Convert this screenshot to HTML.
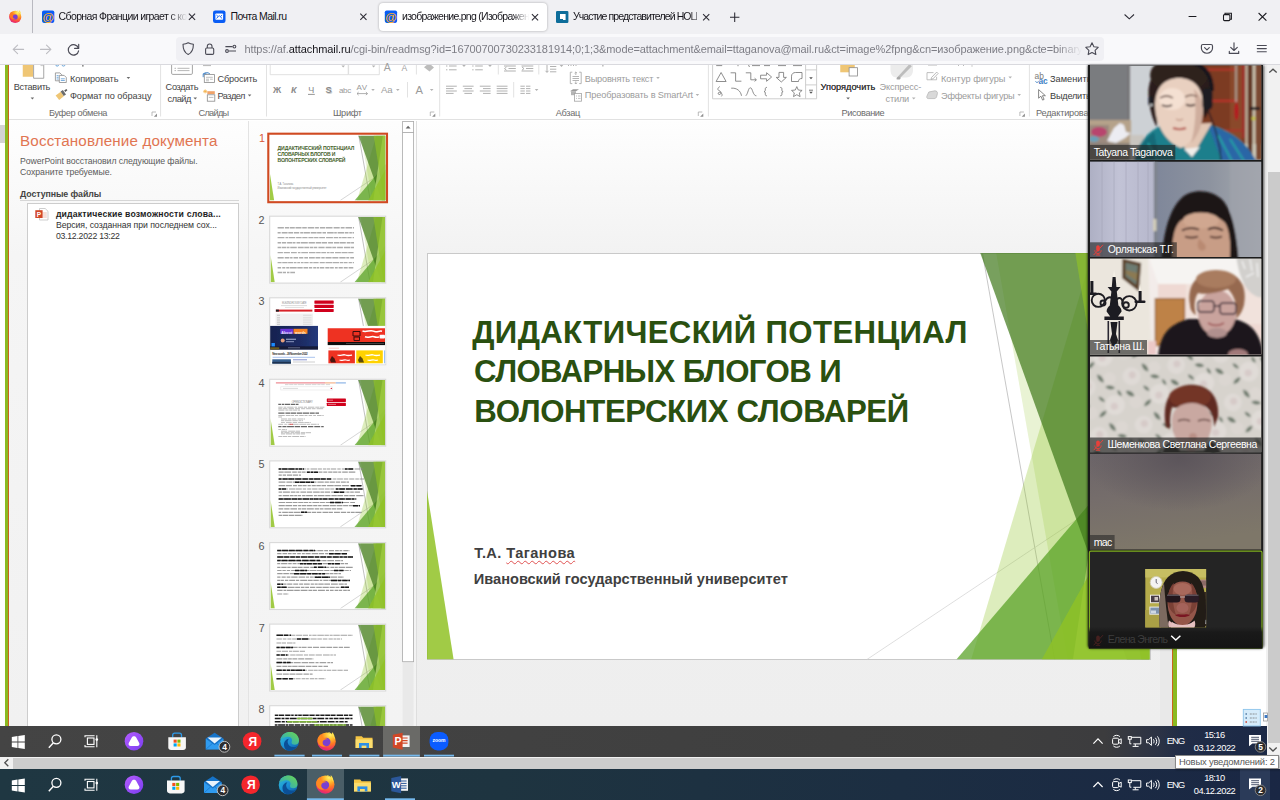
<!DOCTYPE html>
<html lang="ru"><head><meta charset="utf-8"><title>screenshot</title>
<style>
*{box-sizing:border-box;margin:0;padding:0}
html,body{width:1280px;height:800px;overflow:hidden;background:#fff}
body{position:relative;font-family:"Liberation Sans",sans-serif;color:#222}
.a{position:absolute}
.t{position:absolute;white-space:nowrap;line-height:1;font-family:"Liberation Sans",sans-serif}
svg{position:absolute;overflow:visible}
#tabbar{left:0;top:0;width:1280px;height:33.5px;background:#f0f0f3}
#navbar{left:0;top:33.5px;width:1280px;height:30.5px;background:#f9f9fb}
#navline{left:0;top:64px;width:1280px;height:1px;background:#d9d9de}
#urlbar{left:176px;top:37px;width:928px;height:23.5px;border-radius:4px;background:#f0f0f4}
#acttab{left:379px;top:3px;width:168px;height:27.5px;border-radius:4px;background:#fff;box-shadow:0 0 2.5px rgba(0,0,0,.32)}
#content{left:0;top:65px;width:1280px;height:735px;overflow:hidden;background:#fff}

</style></head>
<body>
<svg class="a" style="left:0;top:0" width="0" height="0">
<defs>
<symbol id="facet" viewBox="0 0 12192 6858" preserveAspectRatio="none">
<path d="M9371 0L10590 6858" stroke="var(--l1,#b9b9b9)" stroke-width="var(--lw,.8px)" vector-effect="non-scaling-stroke" fill="none"/>
<path d="M12189 3681L7425 6858" stroke="var(--l2,#d6d6d6)" stroke-width="var(--lw,.8px)" vector-effect="non-scaling-stroke" fill="none"/>
<path d="M11227 0H12192V6858H9181z" fill="#90c226" fill-opacity=".3"/>
<path d="M9603 0H12192V6858H10806z" fill="#90c226" fill-opacity=".2"/>
<path d="M12192 3048V6858H8932z" fill="#54a021" fill-opacity=".72"/>
<path d="M9335 0H12192V6858H11808z" fill="#3f7819" fill-opacity=".7"/>
<path d="M11918 0H12192V6858H10899z" fill="#c0e474" fill-opacity=".7"/>
<path d="M10939 0H12192V6858H12048z" fill="#90c226" fill-opacity=".65"/>
<path d="M12192 3590V6858H10372z" fill="#90c226" fill-opacity=".8"/>
<path d="M0 4013L449 6858H0z" fill="#90c226" fill-opacity=".85"/>
</symbol>
</defs>
</svg>

<div class="a" id="tabbar"></div>
<div class="a" id="navbar"></div>
<div class="a" id="navline"></div>
<div class="a" id="urlbar"></div>
<div class="a" id="acttab"></div>
<div class="a" style="left:32px;top:0;width:1px;height:33px;background:#b9b9c0"></div>

<svg class="a" style="left:0;top:0" width="1280" height="66" viewBox="0 0 1280 66">
<defs>
<radialGradient id="ffg" cx="0.7" cy="0.15" r="1">
<stop offset="0" stop-color="#fff36b"/><stop offset="0.25" stop-color="#ffbd2e"/><stop offset="0.5" stop-color="#ff7a22"/><stop offset="0.8" stop-color="#f2325c"/><stop offset="1" stop-color="#c026a0"/>
</radialGradient>
</defs>
<!-- firefox view icon -->
<circle cx="15.2" cy="16.9" r="6.1" fill="url(#ffg)"/>
<circle cx="15" cy="16.9" r="2.7" fill="#7a3fd0"/>
<path d="M9.6 14.5c.6-1.8 1.8-2.6 2.6-3-.2.9.2 1.6 1 2 1.3.5 2.6.3 3.3 1.3-1.5-.5-3.3 0-3.6 1.500-.3 1.400.8 2.500 2.200 2.600-2.500 1.300-5.800-.6-5.500-4.400z" fill="#ff7a22" opacity=".95"/>
<path d="M16.5 10.300c1.800.5 3.500 2.200 4.200 4.300.4-1.600-.3-3.500-1.500-4.500.1.600 0 1-.2 1.300-.6-.8-1.500-1.200-2.500-1.100z" fill="#ffe14d"/>
<!-- favicon 1: mail.ru @ -->
<rect x="42" y="10.400" width="12.300" height="12.500" rx="1.800" fill="#0a5df5"/>
<text x="48.150" y="20.600" font-family="Liberation Sans, sans-serif" font-weight="bold" font-size="11.800" text-anchor="middle" fill="#ffae1f">@</text>
<!-- favicon 3 -->
<rect x="384.800" y="10.400" width="12.300" height="12.500" rx="1.800" fill="#0a5df5"/>
<text x="390.950" y="20.600" font-family="Liberation Sans, sans-serif" font-weight="bold" font-size="11.800" text-anchor="middle" fill="#ffae1f">@</text>
<!-- favicon 2: envelope -->
<rect x="213" y="10.400" width="12.500" height="12.500" rx="2.200" fill="#0a5df5"/>
<rect x="215.400" y="13.500" width="7.700" height="6.300" rx=".8" fill="#fff"/>
<path d="M216.400 15l1.700 1.600 1.150-.9 1.150.9 1.700-1.600M216.400 18.400l1.700-1.500M222.100 18.400l-1.700-1.500" stroke="#0a5df5" stroke-width=".9" fill="none"/>
<!-- favicon 4 -->
<rect x="556" y="10.900" width="12.400" height="12" rx="1.200" fill="#0d6d9a"/>
<path d="M560 13.900h5.600v6.200h-2.600v-1.200h-3z" fill="#fff"/>
<!-- tab close X -->
<g stroke="#2b2a33" stroke-width="1.050" fill="none">
<path d="M188.900 13.700l6.200 6.200M195.100 13.700l-6.200 6.200"/>
<path d="M360.300 13.600l6.200 6.200M366.500 13.600l-6.200 6.200"/>
<path d="M531.900 14.100l6.200 6.200M538.100 14.100l-6.200 6.200"/>
<path d="M703.100 14.100l6.200 6.200M709.300 14.100l-6.200 6.200"/>
<path d="M730 17.250h9.400M734.700 12.550v9.400"/>
<path d="M1124.600 14.500l4.700 4.300 4.700-4.300"/>
</g>
<g stroke="#1a1a1f" stroke-width="1.050" fill="none">
<path d="M1188.600 16.500h7.800"/>
<path d="M1225 14.700v-1.500h6.400v6h-1.500"/>
<rect x="1223.500" y="14.600" width="6.400" height="6" rx="1"/>
<path d="M1258.600 13l7.800 7.600M1266.400 13l-7.800 7.600"/>
</g>
<!-- nav: back / forward / reload -->
<g stroke="#bdbdc2" stroke-width="1.100" fill="none" stroke-linecap="round" stroke-linejoin="round">
<path d="M23.600 49.400h-10.300M17.600 45.100l-4.400 4.300 4.400 4.300"/>
<path d="M40.500 49.400h10.300M46.500 45.100l4.400 4.300-4.400 4.300"/>
</g>
<g stroke="#4a4a55" stroke-width="1.150" fill="none" stroke-linecap="round" stroke-linejoin="round">
<path d="M78.400 48.200a5.200 5.200 0 1 0 .2 2.600"/>
<path d="M78.700 44.300v4.100h-4.100"/>
</g>
<!-- shield, lock, permissions -->
<g stroke="#4a4a55" stroke-width="1.100" fill="none" stroke-linejoin="round">
<path d="M188.200 42.700c1.700 1 3.400 1.400 5.200 1.500 0 4.600-1.200 8.300-5.200 10.300-4-2-5.200-5.700-5.200-10.300 1.800-.1 3.500-.5 5.200-1.500z"/>
<rect x="205.600" y="48" width="8.100" height="6.400" rx="1.200"/>
<path d="M207.300 48v-1.700a2.350 2.350 0 0 1 4.700 0v1.700"/>
<path d="M225.400 46.600h7.200M229 51h7"/>
<circle cx="234.400" cy="46.600" r="1.400"/>
<circle cx="227" cy="51" r="1.400"/>
</g>
<!-- star -->
<path d="M1092 42.800l1.900 3.900 4.300.6-3.100 3 .75 4.250-3.850-2.050-3.850 2.050.75-4.250-3.100-3 4.300-.6z" stroke="#4a4a55" stroke-width="1.100" fill="none" stroke-linejoin="round"/>
<!-- pocket, download, menu -->
<g stroke="#4a4a55" stroke-width="1.150" fill="none" stroke-linecap="round" stroke-linejoin="round">
<path d="M1202.900 44.500h8.100a1.500 1.500 0 0 1 1.500 1.500v2.200a5.550 5.100 0 0 1-11.100 0v-2.200a1.500 1.500 0 0 1 1.500-1.500z"/>
<path d="M1204.600 47.700l2.350 2.200 2.350-2.200"/>
<path d="M1234 42.800v7.500M1230.700 47.300l3.300 3.200 3.300-3.200M1229.300 51.400v2h9.400v-2"/>
<path d="M1257.300 45.500h9M1257.300 48.600h9M1257.300 51.700h9"/>
</g>
</svg>

<!-- ===== image content (PowerPoint window screenshot shown in the browser) ===== -->
<div class="a" style="left:0;top:125px;width:4.600px;height:17.500px;background:#d3d3d3"></div>
<div class="a" style="left:4.600px;top:65px;width:3.600px;height:661px;background:#8aba22"></div>
<div class="a" style="left:8.200px;top:65px;width:.9px;height:661px;background:#c9641f"></div>
<!-- ribbon bottom line -->
<div class="a" style="left:9px;top:119.300px;width:1079px;height:1px;background:#e1e1e1"></div>
<!-- left pane / thumb pane separator -->
<div class="a" style="left:247.800px;top:121px;width:1px;height:605px;background:#e3e3e3"></div>
<!-- thumbnails pane -->
<div class="a" style="left:248.800px;top:121px;width:167.500px;height:605px;background:linear-gradient(#fdfdfd,#f6f6f6 130px,#f3f3f3)"></div>
<!-- main edit area -->
<div class="a" style="left:416.300px;top:121px;width:756px;height:605px;background:linear-gradient(#fefefe,#f2f2f2 135px,#eeeeee)"></div>
<div class="a" style="left:416.300px;top:121px;width:1px;height:605px;background:#dedede"></div>
<!-- ppt vertical scrollbar strip -->
<div class="a" style="left:1159.500px;top:121px;width:12.500px;height:605px;background:#e9e9e9"></div>
<!-- right edge of ppt window + desktop strip -->
<div class="a" style="left:1172px;top:65px;width:.9px;height:661px;background:#c9641f"></div>
<div class="a" style="left:1172.800px;top:65px;width:3.800px;height:661px;background:#8aba22"></div>
<div class="a" style="left:1176.600px;top:65px;width:91px;height:661px;background:#fff"></div>
<!-- browser vertical scrollbar -->
<div class="a" style="left:1266.400px;top:65px;width:13.600px;height:691.500px;background:#f1f1f1"></div>
<div class="a" style="left:1268.200px;top:172.400px;width:11.800px;height:571px;background:#cbcbcb"></div>
<!-- browser horizontal scrollbar -->
<div class="a" style="left:0;top:756.400px;width:1280px;height:13.200px;background:#f1f1f1"></div>
<div class="a" style="left:13px;top:757.500px;width:1162px;height:11px;background:#cdcdcd"></div>
<svg class="a" style="left:0;top:0" width="1280" height="800" viewBox="0 0 1280 800">
<path d="M1269.300 72.600l3.700-3.400 3.700 3.400" stroke="#505050" stroke-width="1.300" fill="none"/>
<path d="M1269.300 747.600l3.700 3.400 3.700-3.400" stroke="#505050" stroke-width="1.300" fill="none"/>
<path d="M8.300 759.200l-3.500 3.500 3.500 3.500" stroke="#505050" stroke-width="1.300" fill="none"/>
</svg>

<!-- document recovery pane -->
<div class="a" style="left:9.100px;top:120.300px;width:238.700px;height:606px;background:linear-gradient(#fefefe,#f5f5f5 135px,#f1f1f1)"></div>
<div class="a" style="left:20px;top:199.600px;width:218.700px;height:1px;background:#d6d6d6"></div>
<div class="a" style="left:27px;top:203.400px;width:212px;height:523px;background:#fff;border:1px solid #cdcdcd;border-bottom:0"></div>
<svg class="a" style="left:0;top:0" width="1280" height="800" viewBox="0 0 1280 800">
<!-- pptx file icon -->
<path d="M39.500 208.500h5.700l2.800 2.800v8.700h-8.500z" fill="#fff" stroke="#b9b9b9" stroke-width=".7"/>
<path d="M42.500 213h4.300M42.500 215h4.300M42.500 217h4.300" stroke="#e3a090" stroke-width=".7"/>
<rect x="35.300" y="210.200" width="7.300" height="7.800" fill="#d24726"/>
<text x="38.950" y="216.500" font-family="Liberation Sans, sans-serif" font-weight="bold" font-size="6.500" text-anchor="middle" fill="#fff">P</text>
</svg>

<!-- ribbon icons -->
<svg class="a" style="left:0;top:65px" width="1090" height="56" viewBox="0 65 1090 56">
<defs><clipPath id="rc"><rect x="9" y="65" width="1081" height="55"/></clipPath></defs>
<g clip-path="url(#rc)">
<!-- group separators -->
<g stroke="#e2e2e2" stroke-width="1">
<path d="M160.600 65v51.500M266.500 65v51.500M439.700 65v51.500M708.400 65v51.500M1029.400 65v51.500"/>
<path d="M416.400 65v9.500M407.500 82v15.500M498.300 65v9.500M538.800 65v9.500M513.700 82v15.500"/>
</g>
<!-- dialog launchers -->
<g stroke="#a9a9a9" stroke-width=".8" fill="none">
<path d="M152 116v-4h4M1019.900 116v-4h4M430.300 116v-4h4M698.300 116v-4h4"/>
</g>
<g fill="#8f8f8f">
<path d="M157 113.500v3.200h-3.200zM1024.900 113.500v3.200h-3.200zM435.300 113.500v3.200h-3.200zM703.300 113.500v3.200h-3.200z"/>
</g>
<!-- dropdown arrows dark -->
<g fill="#6a6a6a">
<path d="M30.600 97.600h3.600l-1.800 2zM126.600 77h3.600l-1.800 2zM193.450 97.600h3.600l-1.800 2zM247.800 94.500h3.600l-1.800 2zM846.300 97.600h3.600l-1.800 2z"/>
</g>
<g fill="#b3b3b3">
<path d="M341.400 65.500h3.600l-1.800 2zM371.800 65.500h3.600l-1.800 2zM371.200 89h3.600l-1.800 2zM396 89h3.600l-1.800 2zM429.900 89h3.600l-1.800 2zM462.200 65h3.600l-1.800 2zM488.200 65h3.600l-1.800 2zM559.700 65h3.600l-1.800 2zM534.800 89h3.600l-1.800 2zM656.200 77h3.600l-1.800 2zM695.600 94h3.600l-1.800 2zM911.950 97.600h3.600l-1.800 2zM1008.400 76.600h3.600l-1.800 2zM1017.400 94h3.600l-1.800 2z"/>
</g>
<!-- paste -->
<rect x="22.750" y="60" width="10.250" height="16.750" fill="#efc675"/>
<path d="M33.600 60h7.300l2.850 2.850v15.400h-10.150z" fill="#fff" stroke="#9c9c9c" stroke-width=".9"/>
<path d="M40.900 60v5.600h2.850" fill="none" stroke="#b5b5b5" stroke-width=".7"/>
<!-- cut remnants -->
<circle cx="57.200" cy="64.600" r="1.500" fill="none" stroke="#5b9bd5" stroke-width=".9"/>
<circle cx="63.500" cy="64.600" r="1.500" fill="none" stroke="#5b9bd5" stroke-width=".9"/>
<rect x="82.400" y="65" width="1" height="1.600" fill="#444"/>
<!-- copy -->
<g fill="#fff" stroke="#8a8a8a" stroke-width=".8">
<path d="M55.400 72.900h4.500l1.900 1.900v6h-6.400z"/>
<path d="M59.300 75.400h4.900l2.100 2.100v5h-7z"/>
</g>
<path d="M56.600 75.600h2M56.600 77.300h2M56.600 79h2M60.800 78.800h4M60.800 80.500h4" stroke="#5b9bd5" stroke-width=".8"/>
<!-- format painter -->
<path d="M55.600 95.400l5.200-3.600 3 4.400-4.600 3.800z" fill="#efc675"/>
<path d="M60.600 91.600l2.300-1.600 3.100 4.400-2.300 1.700z" fill="#6b6b6b"/>
<path d="M64.200 90.500l2.200-1.500 1 1.300-2.200 1.600z" fill="#555"/>
<!-- new slide -->
<rect x="171.600" y="58" width="20.800" height="16.400" rx="1.200" fill="#fff" stroke="#9a9a9a" stroke-width=".9"/>
<path d="M174.500 68.300h1.500M177.500 68.300h12M174.500 70.600h1.500M177.500 70.600h12" stroke="#a5a5a5" stroke-width=".8"/>
<rect x="203" y="65" width="8" height="1.100" fill="#bdbdbd"/>
<!-- reset -->
<rect x="204.300" y="74.600" width="10.200" height="7.800" fill="#fff" stroke="#8a8a8a" stroke-width=".8"/>
<path d="M206 77.300h6.800M206 79.200h3M210 79.200h2.800M206 80.800h3" stroke="#a5a5a5" stroke-width=".7"/>
<path d="M203.200 77.200v-3.400h3.400" fill="none" stroke="#3c7fc4" stroke-width=".9"/>
<path d="M203.400 74c1.600-1.600 4.400-1.900 6.400-.2" fill="none" stroke="#3c7fc4" stroke-width="1"/>
<!-- section -->
<rect x="207.300" y="91.200" width="7.500" height="2.800" fill="#f0a36a"/>
<rect x="207.300" y="94.800" width="7.500" height="6.400" fill="#fff" stroke="#8a8a8a" stroke-width=".8"/>
<path d="M208.800 97.400h4.600" stroke="#a5a5a5" stroke-width=".7"/>
<path d="M205.200 89.400v4M203.200 91.400h4M203.800 90l2.800 2.800M206.600 90l-2.800 2.800" stroke="#f2b24c" stroke-width=".8"/>
<!-- font combos -->
<path d="M270.200 65v9.700h78.000v-9.700M348.600 65v9.700h30.700v-9.700" fill="none" stroke="#dedede" stroke-width=".9"/>
<!-- eraser -->
<path d="M424 67.200l5-4 5 4.200-4.500 4.200z" fill="#bcbcbc"/>
<!-- underline for Ч, AV arrow -->
<path d="M308 94.400h6.800" stroke="#8a8a8a" stroke-width=".9"/>
<path d="M357 93.600h10.500M358.600 92.100l-1.600 1.500 1.600 1.500M365.900 92.100l1.600 1.500-1.600 1.500" stroke="#9a9a9a" stroke-width=".8" fill="none"/>
<!-- paragraph row 1 -->
<g stroke="#a8a8a8" stroke-width=".9" fill="none">
<path d="M446 66h1.400M449 66h7.600M446 69.800h1.400M449 69.800h7.600"/>
<path d="M472.200 66h1.400M475.200 66h7.600M472.200 69.800h1.400M475.200 69.800h7.600"/>
<path d="M504 66h11.800M508.500 68.500h7.300M504 71h11.800M506.500 67l-2 1.600 2 1.600"/>
<path d="M521.500 66h11.800M526 68.500h7.300M521.500 71h11.800M522 67l2 1.600-2 1.600"/>
<path d="M550 66.500h6.300M550 69.200h6.300M550 71.800h6.300M547 65v7.200M545.500 70.800l1.500 1.600 1.500-1.600"/>
<path d="M568 65.500h1M570.500 65.500h1M573 65.500h1M575.500 65.500h1"/>
</g>
<rect x="602.400" y="65" width="1" height="1.500" fill="#999"/>
<!-- paragraph row 2 : alignment -->
<g stroke="#a3a3a3" stroke-width=".85" fill="none">
<path d="M446 86.200h10.800M446 88.600h7.600M446 91h10.800M446 93.400h7.600"/>
<path d="M462.800 86.200h10.800M464.400 88.600h7.600M462.800 91h10.800M464.400 93.400h7.600"/>
<path d="M479.800 86.200h10.800M483 88.600h7.600M479.800 91h10.800M483 93.400h7.600"/>
<path d="M496.700 86.200h10.800M496.700 88.600h10.800M496.700 91h10.800M496.700 93.400h10.800"/>
<path d="M520.400 86.200h4.400M526 86.200h4.400M520.400 88.600h4.400M526 88.600h4.400M520.400 91h4.400M526 91h4.400M520.400 93.400h4.400M526 93.400h4.400"/>
</g>
<!-- align text icon -->
<g stroke="#a8a8a8" stroke-width=".85" fill="none">
<path d="M570.300 72.200h2M579.200 72.200h2M570.300 83.600h2M579.200 83.600h2M570.300 72.200v11.400M581.200 72.200v11.400"/>
<path d="M572.500 76.500h6.500M572.500 78.500h6.500M572.500 80.500h6.500"/>
<path d="M575.800 72v3M574.600 73.200l1.200-1.200 1.200 1.200M575.800 84v-2.600M574.600 82.800l1.200 1.200 1.200-1.200"/>
</g>
<!-- smartart icon -->
<path d="M570 91.200l3-2h6l-3 2z" fill="#9a9a9a"/>
<rect x="571" y="91.200" width="5" height="4" fill="#b5b5b5"/>
<rect x="574.600" y="93.400" width="7" height="7.800" fill="#fff" stroke="#a3a3a3" stroke-width=".8"/>
<path d="M576 96h1M578 96h2.600M576 98.400h1M578 98.400h2.600" stroke="#a8a8a8" stroke-width=".7"/>
<!-- shapes gallery -->
<path d="M712.600 65v33.800h104v-33.800M805.600 65v33.800M805.600 69.900h11M805.600 84.900h11" fill="none" stroke="#c8c8c8" stroke-width=".9"/>
<path d="M809.200 77.200h3.600l-1.800 2zM809.200 91.800h3.600l-1.800 2z" fill="#555"/>
<path d="M809 90.200h4" stroke="#555" stroke-width=".8"/>
<g stroke="#7a7a7a" stroke-width=".85" fill="none" stroke-linejoin="round">
<path d="M716.200 65.600h6M738 65v1.200M748 65.500l2 1M752 65.600h8M764 65.600h6M778 65.600h8M793 65.600h9"/>
<path d="M721.100 72.500l5 9h-10z"/>
<path d="M730.600 72.800h5v8.400h5.800"/>
<path d="M745.800 72.800h5v7h5.400M754.600 78.200l1.800 1.600-1.800 1.600"/>
<path d="M760.600 75.200h6v-2.500l5 4.300-5 4.300v-2.500h-6z"/>
<path d="M779 72.400h4.600v5h2.800l-5.100 4.600-5.100-4.600h2.800z"/>
<path d="M791.500 76.200c0-2.300 1.800-3.700 4-3.700h6.500v6c-2.500 0-3.500 1-3.500 3h-7z"/>
<path d="M719.800 86.600c-2.200 1.200-2.600 3.200-.8 4 1.800.8 2.600 1.600 1.800 3-.8 1.400-2.800 1.200-2.600-.4.200-1.400 2.400-1.200 3.400.2.800 1.200.6 2.200-.2 3"/>
<path d="M731.200 88.200c5.500-.5 9.500 2.600 10.300 7.600"/>
<path d="M745.800 95.800c2.500-2.500 2.300-8 4.600-8s2.300 8 6 8"/>
<path d="M767 87.400c-1.300 0-1.700.5-1.700 1.600v1.300c0 .8-.4 1.200-1.200 1.300.8.100 1.200.5 1.200 1.300v1.300c0 1.100.4 1.600 1.700 1.600"/>
<path d="M780.200 87.400c1.300 0 1.700.5 1.700 1.600v1.300c0 .8.400 1.200 1.200 1.300-.8.100-1.200.5-1.200 1.300v1.300c0 1.100-.4 1.600-1.700 1.600"/>
<path d="M796.800 86.600l1.500 3.400 3.800.4-2.800 2.500.8 3.700-3.300-1.900-3.300 1.900.8-3.700-2.800-2.500 3.800-.4z"/>
</g>
<!-- arrange -->
<rect x="840.250" y="60" width="14.500" height="12.300" fill="#efc675"/>
<rect x="849.100" y="67.700" width="8.300" height="8.300" fill="#fff" stroke="#8a8a8a" stroke-width=".8"/>
<!-- quick styles -->
<path d="M890.500 60v10c0 4 2 7.500 6 7.500h10c4 0 6.500-3 6.500-7.500v-10z" fill="#ececec"/>
<path d="M898 76.500l11.500-12.500 2.300 2.300-12 12z" fill="#bdbdbd"/>
<path d="M896.500 79.200c0-2 1.500-3 3-2.500l1 1c.5 1.500-1 2.500-4 1.500z" fill="#a8a8a8"/>
<!-- outline / effects / top remnants -->
<path d="M927 72.600h6.500M927 72.600v7.200h9.600v-3" stroke="#b5b5b5" stroke-width=".85" fill="none"/>
<path d="M931.500 77.500l5.200-5.400 1.400 1.400-5.200 5.400-1.900.5z" fill="none" stroke="#a8a8a8" stroke-width=".8"/>
<path d="M928.800 92l6-1.200c1.800 0 3 1.200 2.600 2.800l-.8 3.200c-.3 1.200-1.300 1.800-2.600 1.800h-5.600c-1.300 0-1.900-1-1.600-2.200z" fill="#d9d9d9" stroke="#b0b0b0" stroke-width=".7"/>
<path d="M928 65.500h9" stroke="#dcdcdc" stroke-width="1"/>
<path d="M958 65.400h1M963 65.400h1M972 65.300v1.300" stroke="#aaa" stroke-width=".9"/>
<!-- replace / select -->
<text x="1034.600" y="78.800" font-family="Liberation Sans, sans-serif" font-size="8.400" fill="#7a7a7a">ab</text>
<text x="1038.400" y="84" font-family="Liberation Sans, sans-serif" font-size="8.400" font-weight="bold" fill="#3c7fc4">ac</text>
<path d="M1035.500 81.200l1.500 1.600 1.500-1.600" fill="none" stroke="#3c7fc4" stroke-width=".9"/>
<path d="M1038.600 89.600v8.600l2.300-2 1.700 3.900 1.500-.7-1.700-3.700h3z" fill="#fff" stroke="#6a6a6a" stroke-width=".8" stroke-linejoin="round"/>
</g>
</svg>

<!-- main slide -->
<div class="a" style="left:426.500px;top:252.600px;width:724px;height:407.600px;background:#fff;border:1px solid #c9c9c9"></div>
<svg class="a" style="left:427.200px;top:253.300px" width="722.600" height="406.400"><use href="#facet" width="722.600" height="406.400"/></svg>

<!-- slide thumbnails pane -->
<svg class="a" style="left:0;top:121px" width="420" height="605" viewBox="0 121 420 605">
<defs><clipPath id="tc"><rect x="248" y="121" width="170" height="605"/></clipPath></defs>
<filter id="tb3" x="-5%" y="-5%" width="110%" height="110%"><feGaussianBlur stdDeviation=".32"/></filter>
<g clip-path="url(#tc)">
<rect x="402.600" y="121.500" width="11" height="604.500" fill="#e9e9e9"/>
<rect x="402.600" y="121.500" width="11" height="11" fill="#fff" stroke="#ababab" stroke-width=".8"/>
<path d="M405.600 128.600h5l-2.500-2.900z" fill="#666"/>
<rect x="402.600" y="132.500" width="11" height="529.200" fill="#fff" stroke="#ababab" stroke-width=".8"/>
<rect x="268.300" y="133.700" width="118.700" height="68.500" fill="#fff" stroke="#d04a22" stroke-width="2.100"/>
<use href="#facet" x="269.900" y="135.400" width="115.600" height="65" style="--l1:#8e8e8e;--l2:#b4b4b4;--lw:.55px"/>
<rect x="269.700" y="216.2" width="116" height="66.900" fill="#fff" stroke="#d9d9d9" stroke-width="1.100"/>
<use href="#facet" x="270.500" y="216.9" width="114.600" height="65.300" style="--l1:#8e8e8e;--l2:#b4b4b4;--lw:.55px"/>
<rect x="269.700" y="297.8" width="116" height="66.900" fill="#fff" stroke="#d9d9d9" stroke-width="1.100"/>
<use href="#facet" x="270.500" y="298.5" width="114.600" height="65.300" style="--l1:#8e8e8e;--l2:#b4b4b4;--lw:.55px"/>
<rect x="269.700" y="379.3" width="116" height="66.900" fill="#fff" stroke="#d9d9d9" stroke-width="1.100"/>
<use href="#facet" x="270.500" y="380.0" width="114.600" height="65.300" style="--l1:#8e8e8e;--l2:#b4b4b4;--lw:.55px"/>
<rect x="269.700" y="460.9" width="116" height="66.900" fill="#fff" stroke="#d9d9d9" stroke-width="1.100"/>
<use href="#facet" x="270.500" y="461.6" width="114.600" height="65.300" style="--l1:#8e8e8e;--l2:#b4b4b4;--lw:.55px"/>
<rect x="269.700" y="542.6" width="116" height="66.900" fill="#fff" stroke="#d9d9d9" stroke-width="1.100"/>
<use href="#facet" x="270.500" y="543.3" width="114.600" height="65.300" style="--l1:#8e8e8e;--l2:#b4b4b4;--lw:.55px"/>
<rect x="269.700" y="624.1" width="116" height="66.900" fill="#fff" stroke="#d9d9d9" stroke-width="1.100"/>
<use href="#facet" x="270.500" y="624.8" width="114.600" height="65.300" style="--l1:#8e8e8e;--l2:#b4b4b4;--lw:.55px"/>
<rect x="269.700" y="705.7" width="116" height="66.900" fill="#fff" stroke="#d9d9d9" stroke-width="1.100"/>
<use href="#facet" x="270.500" y="706.4" width="114.600" height="65.300" style="--l1:#8e8e8e;--l2:#b4b4b4;--lw:.55px"/>
<g filter="url(#tb3)">
<path d="M277.6 227.7H354.0" stroke="#777" stroke-width="1.4" stroke-dasharray="6.3 1.0 4.4 0.7 4.8 0.7 6.0 0.7 4.6 0.9 6.6 0.8 3.8 1.0 5.3 0.7 6.6 1.1 6.1 1.0 3.9 0.9 6.5 0.9 4.6 0.6" opacity="0.6"/>
<path d="M277.6 232.8H354.0" stroke="#777" stroke-width="1.4" stroke-dasharray="3.1 1.0 5.9 0.7 4.7 0.8 5.4 1.0 2.9 0.5 6.3 0.8 5.9 0.5 4.5 0.9 3.5 1.1 6.6 0.5 2.6 0.8 6.7 0.7 3.5 0.8 2.6 0.6 4.5 0.8" opacity="0.6"/>
<path d="M277.6 237.6H354.0" stroke="#777" stroke-width="1.4" stroke-dasharray="6.8 1.1 2.8 0.6 6.3 0.9 5.5 0.7 5.2 0.9 5.1 0.6 4.4 0.7 5.8 1.1 6.8 0.8 4.5 0.7 2.7 0.5 4.6 0.7 4.2 1.0 4.9 0.8" opacity="0.6"/>
<path d="M277.6 242.7H354.0" stroke="#777" stroke-width="1.4" stroke-dasharray="3.6 0.8 4.2 0.9 5.3 0.5 2.6 1.0 3.7 0.6 7.0 0.8 6.3 0.8 5.4 0.6 5.4 1.0 4.9 0.9 5.5 0.5 5.9 0.9 3.9 0.5 6.4 0.8" opacity="0.6"/>
<path d="M277.6 247.5H354.0" stroke="#777" stroke-width="1.4" stroke-dasharray="3.6 0.6 4.3 0.6 2.8 0.7 6.6 1.0 5.9 0.6 4.9 0.7 3.3 0.6 3.5 1.1 6.2 1.0 6.1 0.6 3.9 0.9 5.8 1.0 6.5 0.6 5.2 0.9" opacity="0.6"/>
<path d="M277.6 252.6H354.0" stroke="#777" stroke-width="1.4" stroke-dasharray="5.3 0.9 6.1 1.1 5.8 1.1 2.6 0.8 6.7 0.9 6.6 0.6 4.6 0.6 4.9 0.8 2.6 0.6 3.8 1.0 5.9 0.6 6.1 0.6 5.3 0.6" opacity="0.6"/>
<path d="M277.6 257.7H354.0" stroke="#777" stroke-width="1.4" stroke-dasharray="6.1 1.0 4.7 0.7 2.5 0.9 4.6 1.0 4.2 1.0 3.7 1.0 5.8 0.7 4.9 0.9 3.4 0.8 6.1 0.7 6.1 0.9 6.3 0.7 2.9 1.0 6.1 0.8" opacity="0.6"/>
<path d="M277.6 262.6H354.0" stroke="#777" stroke-width="1.4" stroke-dasharray="4.0 0.6 5.4 0.5 4.9 0.7 2.8 0.8 2.7 0.8 2.8 0.6 4.4 1.0 3.1 0.6 5.3 1.1 5.1 0.7 6.9 0.5 6.4 0.7 3.1 0.6 3.9 1.0 3.3 0.8 5.4 0.7" opacity="0.6"/>
<path d="M277.6 267.7H354.0" stroke="#777" stroke-width="1.4" stroke-dasharray="3.5 1.1 3.1 0.9 2.9 0.6 7.0 0.6 5.4 0.8 4.5 0.8 3.4 1.0 2.9 0.6 2.6 0.7 4.3 1.0 4.2 0.6 3.7 1.1 2.8 0.9 4.2 0.9 4.0 0.9 4.7 0.9" opacity="0.6"/>
<path d="M277.6 272.5H295.0" stroke="#777" stroke-width="1.4" stroke-dasharray="4.6 0.7 3.1 1.0 2.5 0.8 6.5 0.5" opacity="0.6"/>
<rect x="270.500" y="325.900" width="115" height="38.400" fill="#fff"/>
<path d="M281.0 305.6H307.0" stroke="#d8d8d8" stroke-width="0.9" opacity="1"/>
<path d="M285.0 307.5H304.0" stroke="#dedede" stroke-width="0.9" opacity="1"/>
<rect x="275.900" y="309.600" width="36.500" height="2" fill="#d8232a"/><rect x="275.900" y="309.600" width="3" height="2" fill="#222"/>
<rect x="275.600" y="313.600" width="37.400" height="11.600" fill="#f1f1f1"/>
<path d="M277.0 315.3H280.0" stroke="#bbb" stroke-width="0.8" opacity="1"/>
<path d="M303.0 315.3H311.5" stroke="#d5d5d5" stroke-width="0.8" opacity="1"/>
<path d="M277.0 317.8H280.0" stroke="#bbb" stroke-width="0.8" opacity="1"/>
<path d="M303.0 317.8H311.5" stroke="#d5d5d5" stroke-width="0.8" opacity="1"/>
<path d="M277.0 320.0H280.0" stroke="#bbb" stroke-width="0.8" opacity="1"/>
<path d="M303.0 320.0H311.5" stroke="#d5d5d5" stroke-width="0.8" opacity="1"/>
<path d="M277.0 322.2H280.0" stroke="#bbb" stroke-width="0.8" opacity="1"/>
<path d="M303.0 322.2H311.5" stroke="#d5d5d5" stroke-width="0.8" opacity="1"/>
<path d="M277.0 324.3H280.0" stroke="#bbb" stroke-width="0.8" opacity="1"/>
<path d="M303.0 324.3H311.5" stroke="#d5d5d5" stroke-width="0.8" opacity="1"/>
<rect x="314.400" y="300.6" width="19.300" height="3.100" rx=".4" fill="#d0021b"/>
<rect x="314.400" y="304.8" width="19.300" height="3.100" rx=".4" fill="#d0021b"/>
<rect x="314.400" y="308.9" width="19.300" height="3.100" rx=".4" fill="#d0021b"/>
<linearGradient id="nv" x1="0" x2="1"><stop offset="0" stop-color="#17224f"/><stop offset=".7" stop-color="#1c2d66"/><stop offset="1" stop-color="#25397c"/></linearGradient>
<rect x="270.200" y="325.900" width="47.800" height="23.600" fill="url(#nv)"/>
<rect x="270.200" y="346.300" width="47.800" height="3.200" fill="#141a38"/><rect x="270.200" y="347.300" width="9" height="2.200" fill="#6b5a1e"/>
<rect x="271.500" y="343" width="3.400" height="3.400" fill="#1a8cff"/>
<rect x="280.300" y="328.800" width="13" height="5" fill="#6b35d9"/><rect x="293.500" y="328.800" width="14" height="5" fill="#f58220"/>
<circle cx="282.700" cy="340.400" r="2" fill="#e7a07c"/>
<path d="M286.0 339.3H296.0" stroke="#8d98bd" stroke-width="1.3" opacity="1"/>
<path d="M286.0 341.6H294.0" stroke="#7783ad" stroke-width="1.3" opacity="1"/>
<path d="M288.0 347.8H300.0" stroke="#69708f" stroke-width="0.9" opacity="1"/>
<rect x="327.700" y="328.250" width="57.300" height="13.800" fill="#ee3124"/><rect x="327.700" y="342" width="57.300" height="3.100" fill="#0a0a0a"/>
<path d="M353 331.500h7v4.500h-7zM354 337h5.500v3.600h-5.500z" fill="none" stroke="#3a0d0a" stroke-width="1"/>
<path d="M362.500 331c4 1.500 8-1.500 11 .2s5.500-.8 8.500 0M365 336.800c3.500 1.500 6-1 9 0s3.500.8 5 0" fill="none" stroke="#fff" stroke-width="1.500"/>
<rect x="379.500" y="334.800" width="5.500" height="3.600" rx="1" fill="#fff"/>
<path d="M346.0 343.6H384.0" stroke="#8a8a8a" stroke-width="0.6" opacity="0.8"/>
<path d="M328.6 348.2H339.0" stroke="#f3b1ab" stroke-width="0.7" opacity="1"/>
<rect x="328.400" y="350.400" width="26.500" height="12.900" fill="#ee3124"/><rect x="356.250" y="350.400" width="26.550" height="12.900" fill="#ffd200"/><rect x="384.200" y="350.400" width=".9" height="12.900" fill="#7fb2f0"/>
<path d="M337.500 355c3 1.200 5.500-1 8 0s4 .6 6.500 0M339.500 360c2.500 1 4.500-.6 6.500 0s2.500.5 4 0" fill="none" stroke="#fff" stroke-width="1.300"/>
<path d="M365.500 355c3 1.200 5.500-1 8 0s4 .6 6.500 0M367.500 360c2.500 1 4.500-.6 6.500 0s2.500.5 4 0" fill="none" stroke="#fff" stroke-width="1.300"/>
<path d="M330 360l2-4 2.500 2.500 1.500 4h-5z" fill="#4a1210"/><path d="M358 360l2-4 2.500 2.500 1.500 4h-5z" fill="#5c4a08"/>
<path d="M272.6 357.3H315.0" stroke="#a9c4ee" stroke-width="1" opacity="1"/>
<rect x="272.300" y="359.300" width="18.600" height="4.300" fill="#35608f"/><rect x="272.300" y="361.800" width="18.600" height="1.800" fill="#1e3350"/>
<path d="M293.0 359.8H307.0" stroke="#7d87c9" stroke-width="0.9" opacity="1"/>
<path d="M293.0 362.0H315.0" stroke="#c9c9c9" stroke-width="0.9" opacity="1"/>
<path d="M275.900 382.900H325" stroke="#ee8d95" stroke-width="1.200"/><path d="M325 382.900h10.700" stroke="#f5b38a" stroke-width="1.200"/><path d="M335.700 382.900h10.200" stroke="#8db4e6" stroke-width="1.200"/>
<path d="M285.0 384.6H330.0" stroke="#c9c9c9" stroke-width="0.8" stroke-dasharray="3.6 0.6 4.3 0.6 2.8 0.7 6.6 1.0 5.9 0.6 4.9 0.7 3.3 0.6 3.5 1.1 6.2 1.0" opacity="1"/>
<rect x="280.800" y="386.800" width="51.500" height="3.200" fill="#fff" stroke="#e3e3e3" stroke-width=".6"/>
<path d="M283.0 388.4H298.0" stroke="#d0d0d0" stroke-width="0.8" opacity="1"/>
<circle cx="331.300" cy="388.400" r=".6" fill="#d0021b"/>
<rect x="326.800" y="398.600" width="19.100" height="3.300" rx=".4" fill="#d0021b"/><rect x="326.800" y="402.800" width="19.100" height="3.200" rx=".4" fill="#d0021b"/>
<path d="M328.0 400.2H333.0" stroke="#f2a3aa" stroke-width="0.7" opacity="1"/>
<path d="M328.0 404.4H336.0" stroke="#f2a3aa" stroke-width="0.7" opacity="1"/>
<path d="M278.3 404.3H298.5" stroke="#555" stroke-width="1.3" stroke-dasharray="2.9 0.7 2.5 0.6 5.2 0.7 4.3 0.6 6.5 0.9" opacity="0.9"/>
<path d="M278.3 413.2H319.0" stroke="#555" stroke-width="1.3" stroke-dasharray="6.2 0.9 4.6 0.5 5.7 0.7 5.5 0.6 6.1 0.7 4.9 0.7 6.1 0.8" opacity="0.9"/>
<path d="M278.3 426.7H323.7" stroke="#555" stroke-width="1.3" stroke-dasharray="3.2 0.9 4.1 0.6 6.8 0.7 5.5 0.8 6.1 1.0 5.3 1.0 5.9 1.0 3.9 0.8" opacity="0.9"/>
<path d="M278.3 407.2H324.4" stroke="#9a9a9a" stroke-width="0.8" stroke-dasharray="4.3 1.0 2.8 0.8 6.4 0.9 2.6 0.9 5.2 0.7 3.1 0.9 6.5 0.9 4.1 0.5 6.2 0.9" opacity="0.85"/>
<path d="M278.3 408.7H324.0" stroke="#9a9a9a" stroke-width="0.8" stroke-dasharray="3.6 0.8 4.7 1.1 5.5 1.1 4.9 1.1 4.1 0.9 5.2 0.7 3.6 1.0 6.6 0.9" opacity="0.85"/>
<path d="M278.3 410.1H300.0" stroke="#9a9a9a" stroke-width="0.8" stroke-dasharray="6.1 1.0 3.1 0.7 3.3 0.6 4.0 0.7 4.7 1.0" opacity="0.85"/>
<path d="M278.3 415.5H323.7" stroke="#9a9a9a" stroke-width="0.8" stroke-dasharray="6.5 1.0 4.8 0.5 2.9 0.9 3.3 1.0 4.5 0.8 3.0 1.1 3.5 1.1 2.7 1.1 4.6 0.7 5.6 0.7" opacity="0.85"/>
<path d="M278.3 417.0H282.0" stroke="#9a9a9a" stroke-width="0.8" stroke-dasharray="4.0 1.0" opacity="0.85"/>
<path d="M281.0 419.0H305.0" stroke="#9a9a9a" stroke-width="0.8" stroke-dasharray="6.0 0.8 3.4 0.6 4.6 1.1 5.7 0.5 6.0 1.0" opacity="0.85"/>
<path d="M281.0 420.7H303.0" stroke="#9a9a9a" stroke-width="0.8" stroke-dasharray="3.2 0.6 6.8 0.8 5.3 0.9 2.8 0.5 5.0 1.0" opacity="0.85"/>
<path d="M281.0 422.4H311.0" stroke="#9a9a9a" stroke-width="0.8" stroke-dasharray="3.9 1.1 5.7 1.0 4.5 0.9 5.7 0.5 5.2 0.7 4.5 1.0" opacity="0.85"/>
<path d="M278.3 424.3H319.0" stroke="#9a9a9a" stroke-width="0.8" stroke-dasharray="4.9 1.1 2.6 0.8 3.4 0.7 6.9 0.6 7.0 0.5 3.5 0.7 5.7 0.7 3.8 0.6" opacity="0.85"/>
<path d="M278.3 429.4H287.0" stroke="#9a9a9a" stroke-width="0.8" stroke-dasharray="2.6 0.9 3.8 0.5 4.0 1.0" opacity="0.85"/>
<path d="M281.0 431.2H300.0" stroke="#9a9a9a" stroke-width="0.8" stroke-dasharray="6.2 1.0 7.0 0.5 4.6 0.6" opacity="0.85"/>
<path d="M281.0 432.7H311.0" stroke="#9a9a9a" stroke-width="0.8" stroke-dasharray="2.5 0.8 5.3 1.1 3.7 0.6 5.0 0.8 4.4 0.5 6.2 1.1" opacity="0.85"/>
<path d="M281.0 433.9H305.0" stroke="#9a9a9a" stroke-width="0.8" stroke-dasharray="4.2 0.8 6.1 0.7 2.7 0.7 4.0 0.6 5.0 0.6" opacity="0.85"/>
<path d="M278.3 436.5H305.5" stroke="#9a9a9a" stroke-width="0.8" stroke-dasharray="3.7 0.6 4.4 0.7 3.6 0.9 7.0 0.8 4.5 0.5 3.9 1.0" opacity="0.85"/>
<path d="M289.5 424.3H293.0" stroke="#e04040" stroke-width="0.8" opacity="1"/>
<path d="M278.6 469.0H364.0" stroke="#8a8a8a" stroke-width="1.2" stroke-dasharray="3.2 0.8 6.0 0.9 5.8 0.8 6.1 0.8 2.9 0.8 2.7 1.1 6.8 0.7 3.9 1.0 3.4 0.6 3.3 0.7 5.3 1.1 3.4 1.1 5.0 1.0 6.2 0.6 5.4 0.6 2.5 0.7 6.0 0.8" opacity="0.85"/>
<path d="M278.6 469.0H304.0" stroke="#111" stroke-width="1.5" stroke-dasharray="2.7 0.6 5.7 0.6 6.4 0.7 2.6 0.8 3.3 0.5 3.8 0.8" opacity="0.95"/>
<path d="M345.0 469.0H353.0" stroke="#111" stroke-width="1.5" stroke-dasharray="2.7 0.6 5.7 0.6" opacity="0.95"/>
<path d="M278.6 472.2H356.0" stroke="#8a8a8a" stroke-width="1.2" stroke-dasharray="5.1 0.6 6.8 1.1 4.6 0.9 3.5 0.6 3.8 0.9 3.5 1.1 2.8 0.6 2.9 1.0 4.1 0.8 4.0 0.9 4.3 0.6 4.4 0.7 3.0 1.0 5.6 0.9 6.5 0.7 4.2 0.8" opacity="0.85"/>
<path d="M307.0 472.2H318.0" stroke="#111" stroke-width="1.5" stroke-dasharray="2.8 0.7 2.5 0.7 5.9 0.9" opacity="0.95"/>
<path d="M278.6 475.1H301.0" stroke="#8a8a8a" stroke-width="1.2" stroke-dasharray="3.2 0.9 3.3 0.9 5.2 0.7 5.3 0.8 2.7 0.8" opacity="0.85"/>
<path d="M278.6 479.0H364.0" stroke="#8a8a8a" stroke-width="1.2" stroke-dasharray="6.9 0.8 5.7 0.9 3.5 0.5 5.2 0.6 4.2 1.0 6.4 0.6 2.9 0.6 6.2 0.5 3.5 0.6 3.1 0.8 3.3 0.7 5.8 0.9 4.4 1.0 5.1 1.0 3.6 0.7 5.1 1.1" opacity="0.85"/>
<path d="M278.6 479.0H331.0" stroke="#111" stroke-width="1.5" stroke-dasharray="2.9 1.0 5.2 0.6 6.0 0.9 6.2 0.9 5.8 1.0 4.0 0.6 6.5 0.6 5.0 1.1 4.1 0.7" opacity="0.95"/>
<path d="M278.6 482.2H349.0" stroke="#8a8a8a" stroke-width="1.2" stroke-dasharray="6.8 1.0 5.8 0.6 4.0 0.9 6.1 0.5 3.3 1.0 3.0 0.9 4.0 0.9 6.4 0.8 4.3 0.7 5.3 0.9 4.3 0.8 4.9 0.7 3.3 0.8" opacity="0.85"/>
<path d="M295.0 482.2H314.0" stroke="#111" stroke-width="1.5" stroke-dasharray="4.3 0.6 5.1 0.6 4.7 0.7 5.6 0.6" opacity="0.95"/>
<path d="M278.6 485.7H362.0" stroke="#8a8a8a" stroke-width="1.2" stroke-dasharray="6.5 0.7 6.1 1.1 3.9 1.0 4.0 0.6 4.1 1.0 3.2 0.9 4.1 0.6 4.4 0.7 4.6 1.0 6.6 0.6 6.9 0.9 6.8 1.0 4.9 0.7 6.7 1.1" opacity="0.85"/>
<path d="M351.0 485.7H362.0" stroke="#111" stroke-width="1.5" stroke-dasharray="4.5 0.9 4.9 0.8" opacity="0.95"/>
<path d="M278.6 489.0H363.0" stroke="#8a8a8a" stroke-width="1.2" stroke-dasharray="5.7 1.0 2.6 1.1 6.2 0.5 6.1 1.0 3.3 1.1 4.1 0.8 5.4 0.9 5.9 0.7 4.7 0.6 3.7 0.8 2.8 0.7 6.2 0.6 4.5 0.5 5.8 0.6 3.3 0.9 4.5 0.8" opacity="0.85"/>
<path d="M278.6 489.0H286.0" stroke="#111" stroke-width="1.5" stroke-dasharray="2.5 0.7 5.8 1.0" opacity="0.95"/>
<path d="M336.0 489.0H363.0" stroke="#111" stroke-width="1.5" stroke-dasharray="2.5 0.7 5.8 1.0 6.5 1.1 3.3 0.7 4.9 0.9" opacity="0.95"/>
<path d="M278.6 492.2H360.0" stroke="#8a8a8a" stroke-width="1.2" stroke-dasharray="3.6 0.8 6.9 0.9 4.7 0.7 3.1 1.1 5.9 0.7 5.2 0.9 6.6 0.7 3.9 0.6 5.2 1.1 5.8 0.6 4.2 0.5 3.2 0.8 3.2 0.7 3.6 0.8 6.4 0.6" opacity="0.85"/>
<path d="M334.0 492.2H344.0" stroke="#111" stroke-width="1.5" stroke-dasharray="4.8 0.9 6.3 0.6" opacity="0.95"/>
<path d="M278.6 495.7H364.0" stroke="#8a8a8a" stroke-width="1.2" stroke-dasharray="3.1 1.0 6.5 0.7 3.7 0.6 2.9 0.6 3.4 1.0 3.4 0.6 6.7 1.1 3.0 0.7 6.9 0.7 5.3 0.9 5.4 0.5 5.8 1.0 4.5 0.7 5.8 1.1 6.7 0.6 5.9 0.8" opacity="0.85"/>
<path d="M278.6 499.0H357.0" stroke="#8a8a8a" stroke-width="1.2" stroke-dasharray="3.8 0.8 5.0 0.6 4.8 1.1 5.0 0.8 6.1 0.8 3.7 1.0 3.3 1.0 6.5 0.8 4.8 0.5 3.3 1.0 5.8 0.9 3.1 0.9 7.0 1.0 5.5 0.8" opacity="0.85"/>
<path d="M278.6 499.0H356.0" stroke="#111" stroke-width="1.5" stroke-dasharray="5.0 0.5 6.8 0.7 5.4 0.6 4.1 0.9 6.7 0.7 3.4 0.5 4.7 0.7 2.6 0.6 5.0 0.9 5.4 0.9 3.8 0.6 5.7 0.9 5.2 0.5 3.0 1.0 3.1 0.7" opacity="0.95"/>
<path d="M278.6 502.5H355.0" stroke="#8a8a8a" stroke-width="1.2" stroke-dasharray="6.7 0.7 6.2 0.6 4.7 0.7 4.9 0.5 4.4 0.7 2.7 1.0 6.6 0.6 5.3 0.8 4.4 0.9 5.5 0.7 4.1 0.8 7.0 1.1 6.0 0.8" opacity="0.85"/>
<path d="M330.0 502.5H343.0" stroke="#111" stroke-width="1.5" stroke-dasharray="4.2 0.9 5.8 0.7 3.3 0.5" opacity="0.95"/>
<path d="M278.6 505.7H360.0" stroke="#8a8a8a" stroke-width="1.2" stroke-dasharray="6.2 0.6 6.7 0.8 4.3 0.9 3.3 0.6 4.4 0.6 5.5 0.7 4.2 0.7 3.5 0.9 6.6 0.7 6.1 0.7 5.9 0.6 5.1 0.7 6.4 1.0 3.0 0.6" opacity="0.85"/>
<path d="M353.0 505.7H360.0" stroke="#111" stroke-width="1.5" stroke-dasharray="5.0 0.9 2.6 1.0" opacity="0.95"/>
<path d="M278.6 508.8H343.0" stroke="#8a8a8a" stroke-width="1.2" stroke-dasharray="4.7 0.9 5.3 0.9 6.6 1.0 3.2 0.6 4.5 0.7 6.8 0.9 4.6 0.7 3.5 0.9 6.7 0.6 4.5 0.7 5.2 0.7 2.8 0.9" opacity="0.85"/>
<path d="M278.6 512.3H362.0" stroke="#8a8a8a" stroke-width="1.2" stroke-dasharray="2.6 1.0 5.7 0.5 5.0 0.6 6.5 1.0 3.9 0.9 4.7 0.7 4.4 0.7 4.6 1.1 5.8 0.5 4.1 1.1 5.9 0.9 5.4 0.9 3.2 0.7 3.7 0.6 5.6 0.5 3.3 0.9" opacity="0.85"/>
<path d="M301.0 512.3H307.0" stroke="#111" stroke-width="1.5" stroke-dasharray="3.2 0.6 2.6 0.7" opacity="0.95"/>
<path d="M278.6 515.4H303.0" stroke="#8a8a8a" stroke-width="1.2" stroke-dasharray="3.6 0.6 5.5 0.6 5.3 0.6 6.9 0.9 3.8 0.5" opacity="0.85"/>
<path d="M277.2 550.6H350.0" stroke="#8a8a8a" stroke-width="1.2" stroke-dasharray="5.2 0.7 2.5 0.7 6.2 0.8 5.1 0.6 4.4 0.7 3.1 0.6 2.9 1.0 4.8 0.8 6.0 0.9 3.8 1.0 5.0 1.1 3.7 0.7 2.8 1.0 5.3 1.0 4.2 1.1" opacity="0.85"/>
<path d="M277.2 550.6H315.0" stroke="#111" stroke-width="1.5" stroke-dasharray="3.9 0.7 6.2 0.8 6.0 0.8 6.7 1.0 5.0 1.1 3.8 0.6 6.6 1.1" opacity="0.95"/>
<path d="M277.2 553.7H347.0" stroke="#8a8a8a" stroke-width="1.2" stroke-dasharray="4.3 1.0 4.7 0.8 3.6 0.9 3.6 1.1 3.6 1.1 2.9 0.8 5.0 1.1 6.3 0.7 5.4 1.0 3.3 1.0 6.2 1.1 3.5 0.9 4.6 1.1 6.0 0.5" opacity="0.85"/>
<path d="M329.0 553.7H347.0" stroke="#111" stroke-width="1.5" stroke-dasharray="4.7 0.8 6.2 1.0 6.1 0.7" opacity="0.95"/>
<path d="M277.2 557.0H353.0" stroke="#8a8a8a" stroke-width="1.2" stroke-dasharray="6.8 0.8 5.0 0.8 3.4 0.5 4.3 0.8 6.0 0.7 6.9 0.6 5.5 0.5 3.5 0.6 6.9 0.9 5.0 1.0 6.8 0.7 6.4 0.7 5.7 1.0" opacity="0.85"/>
<path d="M277.2 557.0H353.0" stroke="#111" stroke-width="1.5" stroke-dasharray="6.2 0.6 5.4 0.7 5.0 0.7 4.3 0.9 6.3 0.6 6.0 0.9 4.6 0.9 5.9 0.9 4.7 1.0 6.0 0.8 3.2 0.7 3.7 0.7 6.6 0.6" opacity="0.95"/>
<path d="M277.2 560.6H343.0" stroke="#8a8a8a" stroke-width="1.2" stroke-dasharray="2.6 1.1 3.4 1.1 6.8 0.7 4.8 0.7 4.3 1.0 6.2 0.7 4.9 0.9 5.2 0.6 4.3 0.8 6.7 1.0 5.5 0.7 6.7 0.6" opacity="0.85"/>
<path d="M277.2 560.6H320.0" stroke="#111" stroke-width="1.5" stroke-dasharray="3.6 0.7 6.0 1.0 7.0 0.9 4.6 1.1 6.5 1.0 5.9 1.0 4.3 0.9" opacity="0.95"/>
<path d="M277.2 563.7H348.0" stroke="#8a8a8a" stroke-width="1.2" stroke-dasharray="3.1 0.8 6.3 0.8 3.5 0.9 3.9 0.9 3.5 1.0 2.7 0.7 6.7 0.6 4.3 0.6 4.2 0.8 6.8 1.1 3.9 1.0 4.6 0.6 3.7 0.7 4.3 1.1" opacity="0.85"/>
<path d="M300.0 563.7H322.0" stroke="#111" stroke-width="1.5" stroke-dasharray="2.9 0.7 2.5 0.6 5.2 0.7 4.3 0.6 6.5 0.9" opacity="0.95"/>
<path d="M328.0 563.7H340.0" stroke="#111" stroke-width="1.5" stroke-dasharray="2.9 0.7 2.5 0.6 5.2 0.7" opacity="0.95"/>
<path d="M277.2 567.3H353.0" stroke="#8a8a8a" stroke-width="1.2" stroke-dasharray="3.3 0.8 5.3 0.7 3.3 1.0 5.3 0.6 5.1 0.9 5.7 1.0 6.8 0.9 6.9 0.8 3.7 1.1 3.7 0.6 3.1 0.8 6.6 0.7 6.8 1.0" opacity="0.85"/>
<path d="M314.0 567.3H326.0" stroke="#111" stroke-width="1.5" stroke-dasharray="2.7 1.1 5.7 1.0 6.3 0.9" opacity="0.95"/>
<path d="M277.2 570.5H351.0" stroke="#8a8a8a" stroke-width="1.2" stroke-dasharray="4.4 0.8 3.4 1.0 3.4 0.9 4.2 0.9 6.0 0.5 6.7 0.5 6.6 0.5 6.4 0.8 5.2 0.9 6.9 0.7 6.7 0.5 3.7 0.9 5.3 1.0" opacity="0.85"/>
<path d="M295.0 570.5H307.0" stroke="#111" stroke-width="1.5" stroke-dasharray="4.4 0.8 4.3 0.7 3.0 0.5" opacity="0.95"/>
<path d="M334.0 570.5H344.0" stroke="#111" stroke-width="1.5" stroke-dasharray="4.4 0.8 4.3 0.7" opacity="0.95"/>
<path d="M277.2 573.7H341.0" stroke="#8a8a8a" stroke-width="1.2" stroke-dasharray="5.4 0.7 5.6 0.8 4.4 0.5 4.2 0.9 3.4 0.7 3.4 1.0 5.9 1.0 6.6 0.9 6.4 0.5 4.0 0.6 3.6 0.7 4.8 1.0" opacity="0.85"/>
<path d="M294.0 573.7H325.0" stroke="#111" stroke-width="1.5" stroke-dasharray="5.5 0.6 6.2 0.8 4.1 0.9 5.6 0.8 2.8 0.8 6.1 1.0" opacity="0.95"/>
<path d="M277.2 577.2H344.0" stroke="#8a8a8a" stroke-width="1.2" stroke-dasharray="3.3 1.1 4.1 1.0 3.7 0.8 6.4 1.0 6.5 0.8 3.3 0.8 2.9 0.5 3.6 0.9 5.6 0.8 5.3 0.8 6.6 0.8 5.0 0.7 4.3 1.0" opacity="0.85"/>
<path d="M315.0 577.2H330.0" stroke="#111" stroke-width="1.5" stroke-dasharray="6.1 0.8 6.7 0.6 5.1 0.8" opacity="0.95"/>
<path d="M277.2 580.4H350.0" stroke="#8a8a8a" stroke-width="1.2" stroke-dasharray="2.8 0.5 3.4 1.0 3.4 0.9 5.9 0.8 3.3 1.0 6.9 0.7 4.9 0.6 5.5 0.9 2.6 1.0 5.2 0.6 2.6 0.5 6.7 1.0 6.2 0.8 3.2 0.5" opacity="0.85"/>
<path d="M331.0 580.4H350.0" stroke="#111" stroke-width="1.5" stroke-dasharray="6.2 0.8 3.2 1.0 5.4 0.8 6.8 1.0" opacity="0.95"/>
<path d="M277.2 584.2H347.0" stroke="#8a8a8a" stroke-width="1.2" stroke-dasharray="5.0 0.6 3.7 0.7 5.1 1.0 4.9 1.0 3.9 0.8 5.8 1.0 3.2 0.7 3.1 0.6 5.4 0.6 5.7 1.0 6.8 0.9 5.0 0.7 5.6 0.7" opacity="0.85"/>
<path d="M277.2 584.2H283.0" stroke="#111" stroke-width="1.5" stroke-dasharray="3.2 1.1 2.6 0.7" opacity="0.95"/>
<path d="M277.2 587.3H349.0" stroke="#8a8a8a" stroke-width="1.2" stroke-dasharray="6.2 0.7 2.8 0.8 6.9 0.6 5.0 0.8 3.5 0.7 3.9 0.9 5.3 0.9 5.6 0.7 6.3 0.8 5.2 0.7 3.9 1.0 6.0 1.0 3.7 0.6" opacity="0.85"/>
<path d="M277.2 587.3H287.0" stroke="#111" stroke-width="1.5" stroke-dasharray="3.5 0.7 5.2 0.6" opacity="0.95"/>
<path d="M341.0 587.3H349.0" stroke="#111" stroke-width="1.5" stroke-dasharray="3.5 0.7 5.2 0.6" opacity="0.95"/>
<path d="M277.2 590.4H350.0" stroke="#8a8a8a" stroke-width="1.2" stroke-dasharray="5.4 0.9 2.6 0.6 6.9 0.6 5.6 0.8 6.9 0.9 4.0 0.6 3.9 1.0 7.0 1.0 3.2 0.9 3.6 1.0 3.7 0.6 3.3 1.0 3.6 0.6 3.1 0.7" opacity="0.85"/>
<path d="M277.2 594.0H289.0" stroke="#8a8a8a" stroke-width="1.2" stroke-dasharray="5.0 1.1 4.4 1.0 3.4 0.6" opacity="0.85"/>
<path d="M276.5 635.2H352.9" stroke="#909090" stroke-width="1.1" stroke-dasharray="6.1 1.1 5.1 0.7 5.9 0.7 6.1 0.7 5.1 1.0 2.6 0.7 4.3 0.7 6.6 0.5 4.5 0.7 3.1 0.6 6.5 0.7 6.6 0.7 4.0 0.6 2.9 0.5" opacity="0.85"/>
<path d="M276.5 635.2H291.0" stroke="#111" stroke-width="1.5" stroke-dasharray="6.7 0.7 4.5 1.1 6.7 0.7" opacity="0.95"/>
<path d="M276.5 639.0H342.0" stroke="#909090" stroke-width="1.1" stroke-dasharray="5.4 0.9 3.6 1.0 4.0 0.7 5.7 0.7 6.8 0.8 4.2 0.5 5.9 0.6 4.6 0.9 4.6 1.1 4.3 0.7 3.0 0.5 3.0 0.8 3.0 0.8" opacity="0.85"/>
<path d="M276.5 643.0H295.4" stroke="#909090" stroke-width="1.1" stroke-dasharray="4.8 0.6 4.1 1.0 5.6 0.6 6.5 1.0" opacity="0.85"/>
<path d="M276.5 647.4H350.0" stroke="#909090" stroke-width="1.1" stroke-dasharray="3.3 0.7 3.4 0.7 6.5 0.5 6.0 0.9 2.6 0.5 5.0 1.0 4.4 0.9 6.2 1.1 5.4 0.7 5.9 0.9 4.6 1.0 4.4 0.9 5.7 1.0" opacity="0.85"/>
<path d="M276.5 647.4H293.0" stroke="#111" stroke-width="1.5" stroke-dasharray="3.2 0.8 4.5 0.8 4.8 0.5 2.9 0.5" opacity="0.95"/>
<path d="M276.5 651.2H305.0" stroke="#909090" stroke-width="1.1" stroke-dasharray="4.6 0.8 6.1 1.0 3.4 0.6 5.9 0.9 5.3 1.1" opacity="0.85"/>
<path d="M276.5 655.0H336.0" stroke="#909090" stroke-width="1.1" stroke-dasharray="3.2 1.0 3.8 0.9 3.8 1.0 5.4 0.5 6.8 1.0 4.3 0.8 5.7 0.9 6.3 1.1 6.7 0.6 2.6 0.7 3.5 1.0" opacity="0.85"/>
<path d="M276.5 655.0H287.5" stroke="#111" stroke-width="1.5" stroke-dasharray="3.3 0.8 4.5 0.8 2.8 0.6" opacity="0.95"/>
<path d="M276.5 658.9H313.3" stroke="#909090" stroke-width="1.1" stroke-dasharray="5.9 0.8 4.2 0.7 3.7 0.6 4.9 0.9 6.1 0.8 6.8 0.6 7.0 1.0" opacity="0.85"/>
<path d="M276.5 662.6H333.0" stroke="#909090" stroke-width="1.1" stroke-dasharray="4.7 0.9 6.8 0.8 3.6 0.7 6.7 0.9 6.5 0.7 5.6 1.1 3.1 1.0 6.6 1.1 3.1 0.6 6.6 0.7" opacity="0.85"/>
<path d="M276.5 662.6H290.6" stroke="#111" stroke-width="1.5" stroke-dasharray="5.6 1.1 3.0 0.7 6.6 1.0" opacity="0.95"/>
<path d="M276.5 666.4H328.0" stroke="#909090" stroke-width="1.1" stroke-dasharray="4.9 0.9 4.7 0.6 4.1 0.5 5.4 0.7 6.6 0.8 5.8 0.7 5.1 1.0 4.2 1.0 6.8 0.7" opacity="0.85"/>
<path d="M276.5 670.3H348.0" stroke="#909090" stroke-width="1.1" stroke-dasharray="5.7 1.0 3.4 0.6 3.1 0.8 5.0 0.9 5.5 0.7 3.9 1.0 5.2 0.5 3.9 0.6 4.4 0.7 2.6 0.6 4.7 0.8 4.5 0.8 5.3 1.0 7.0 0.6" opacity="0.85"/>
<path d="M276.5 670.3H305.0" stroke="#111" stroke-width="1.5" stroke-dasharray="5.3 0.7 3.3 0.9 3.6 0.6 3.9 0.5 6.8 0.5 4.1 0.7" opacity="0.95"/>
<path d="M276.5 674.1H312.6" stroke="#909090" stroke-width="1.1" stroke-dasharray="5.6 0.8 5.9 0.7 6.0 0.6 6.4 1.0 5.4 0.8 3.2 0.9" opacity="0.85"/>
<path d="M276.5 678.7H326.0" stroke="#909090" stroke-width="1.1" stroke-dasharray="3.0 0.6 3.6 0.9 3.4 0.7 6.3 0.6 5.0 1.0 3.9 0.5 2.8 1.0 4.4 0.6 2.7 1.0 6.0 1.1 5.3 1.0" opacity="0.85"/>
<path d="M276.5 678.7H293.0" stroke="#111" stroke-width="1.5" stroke-dasharray="4.9 1.1 5.3 1.1 4.0 0.5" opacity="0.95"/>
<path d="M297.0 639.0H309.0" stroke="#111" stroke-width="1.5" stroke-dasharray="3.9 0.9 6.5 0.8" opacity="0.95"/>
<path d="M274.8 715.2H352.5" stroke="#111" stroke-width="1.5" stroke-dasharray="3.2 0.6 5.6 1.0 5.3 0.7 2.5 1.0 2.9 0.6 3.6 0.7 6.2 0.7 5.3 0.9 4.0 0.7 4.3 0.6 4.9 0.5 5.0 1.0 6.5 0.8 4.4 0.8 5.2 1.0" opacity="0.95"/>
<path d="M274.8 718.5H352.5" stroke="#111" stroke-width="1.5" stroke-dasharray="5.9 0.8 3.0 0.8 3.6 0.8 7.0 0.8 2.7 0.6 6.5 0.6 4.2 0.5 4.0 0.7 6.9 1.1 3.0 1.0 3.6 0.8 4.8 0.8 5.0 0.8 4.5 0.7 3.4 0.6" opacity="0.95"/>
<path d="M274.8 721.8H348.0" stroke="#111" stroke-width="1.5" stroke-dasharray="5.9 1.0 3.1 1.0 6.2 1.0 5.7 1.1 6.2 1.0 4.4 0.5 7.0 0.9 6.9 1.0 6.9 0.9 2.9 0.9 4.4 1.0 2.9 0.8" opacity="0.95"/>
<path d="M274.8 725.0H352.5" stroke="#111" stroke-width="1.5" stroke-dasharray="2.7 0.6 6.9 0.6 2.8 0.6 4.9 0.7 5.8 0.7 3.2 1.0 3.2 0.8 6.0 0.6 3.4 0.7 3.0 0.9 5.1 1.0 2.7 0.8 3.0 1.1 5.2 0.7 5.5 0.8 4.1 0.7" opacity="0.95"/>
<path d="M297.0 718.5H312.5" stroke="#8cc63f" stroke-width="1.5" opacity="0.9"/>
<path d="M287.0 721.8H317.5" stroke="#8cc63f" stroke-width="1.5" opacity="0.9"/>
<path d="M314.0 725.0H346.0" stroke="#8cc63f" stroke-width="1.5" opacity="0.9"/>
</g>
</g></svg>

<!-- Zoom meeting thumbnails panel -->
<div class="a" style="left:1088.200px;top:64.500px;width:174.600px;height:583.800px;background:#1b1b1b;border-radius:0 0 3.500px 3.500px;box-shadow:-1px 0 2px rgba(0,0,0,.35),1.500px 0 2.500px rgba(0,0,0,.4),0 1px 2.500px rgba(0,0,0,.4)"></div>
<svg class="a" style="left:1090px;top:64.500px" width="171.500" height="584" viewBox="0 0 171.500 584">
<defs>
<filter id="b1" x="-20%" y="-20%" width="140%" height="140%"><feGaussianBlur stdDeviation="1.100"/></filter>
<filter id="b2" x="-20%" y="-20%" width="140%" height="140%"><feGaussianBlur stdDeviation="2.200"/></filter>
<filter id="b05" x="-20%" y="-20%" width="140%" height="140%"><feGaussianBlur stdDeviation=".55"/></filter>
<clipPath id="k1"><rect x="0" y=".4" width="171.300" height="94.300"/></clipPath>
<clipPath id="k2"><rect x="0" y="96.700" width="171.300" height="95.400"/></clipPath>
<clipPath id="k3"><rect x="0" y="193.700" width="171.300" height="95.800"/></clipPath>
<clipPath id="k4"><rect x="0" y="291.500" width="171.300" height="95.700"/></clipPath>
<clipPath id="k5"><rect x="0" y="388.700" width="171.300" height="95.800"/></clipPath>
<clipPath id="k6"><rect x="55.300" y="503.900" width="60.900" height="58.500"/></clipPath>
<linearGradient id="w2" x1="0" x2="1"><stop offset="0" stop-color="#7a8294"/><stop offset=".38" stop-color="#7f879a"/><stop offset=".7" stop-color="#8d939f"/><stop offset="1" stop-color="#a6aab0"/></linearGradient>
<linearGradient id="c2" x1="0" x2="1"><stop offset="0" stop-color="#aeb0c4"/><stop offset=".45" stop-color="#c2c3d6"/><stop offset="1" stop-color="#b6b7cc"/></linearGradient>
<linearGradient id="m5" x1="0" y1="0" x2=".25" y2="1"><stop offset="0" stop-color="#6c6569"/><stop offset=".45" stop-color="#756d6b"/><stop offset="1" stop-color="#7e7769"/></linearGradient>
<radialGradient id="m5b" cx=".52" cy=".05" r=".55"><stop offset="0" stop-color="#5c555b"/><stop offset="1" stop-color="#5c555b" stop-opacity="0"/></radialGradient>
<linearGradient id="ov6" x1="0" y1="0" x2="0" y2="1"><stop offset="0" stop-color="#1c1c1c" stop-opacity=".0"/><stop offset=".25" stop-color="#181818" stop-opacity=".9"/><stop offset="1" stop-color="#141414"/></linearGradient>
<pattern id="wp" width="46" height="50" patternUnits="userSpaceOnUse" patternTransform="rotate(-14)">
<rect width="46" height="50" fill="#d7d3cd"/>
<circle cx="11" cy="12" r="9" fill="#dfdad6"/><circle cx="34" cy="36" r="10" fill="#e0dbd7"/><circle cx="12" cy="11" r="3.500" fill="#d6cac8"/><circle cx="33" cy="37" r="3.600" fill="#d7cbc9"/>
<circle cx="35" cy="9" r="6.500" fill="#dcd7d2"/><circle cx="9" cy="38" r="6.500" fill="#dbd6d1"/>
<path d="M24 2c3.500 1.500 5.500 5 4.500 9.500-3.500-1.500-5.500-5-4.500-9.500zM29 16c3.500-1.500 7 0 9 3.500-3.500 1.500-7 0-9-3.500zM2 25c3.500 0 7 2.500 7 7-3.500 0-7-2.500-7-7zM16 44c1.500-3.500 5-5.500 8.500-4.500-1.500 3.500-5 5.500-8.500 4.500zM20 24c3 .7 5 3 5 6.500-3-.7-5-3-5-6.500zM40 22c2.500 1.500 3.500 4 2.500 7-2.500-1.500-3.500-4-2.500-7z" fill="#6f7b6e"/>
</pattern>
</defs>
<!-- tile 1 : Tatyana Taganova -->
<g clip-path="url(#k1)">
<rect x="0" y="0" width="171.500" height="95" fill="#cdd1d5"/>
<g filter="url(#b1)">
<rect x="-3" y="-3" width="42" height="59" fill="#7a7b7f"/>
<rect x="38.200" y="-3" width="1.600" height="60" fill="#6c6a6a"/>
<rect x="-3" y="55" width="44" height="26" fill="#b5a28a"/>
<rect x="-3" y="60" width="22" height="18" fill="#9c8a7e"/>
<ellipse cx="9" cy="67" rx="8" ry="5" fill="#b8446e"/><ellipse cx="4" cy="74" rx="5" ry="3" fill="#6aa0b8"/>
<path d="M17 76l7-13 6-5 4 2 2 7 5 1-6 5-9 5z" fill="#ececf2"/>
<rect x="-3" y="78" width="50" height="20" fill="#8b8178"/>
<rect x="40" y="70" width="14" height="26" fill="#c9c5bf"/>
<!-- wardrobe -->
<rect x="111" y="-3" width="63" height="82" fill="#7b3b23"/>
<rect x="140" y="-3" width="12" height="82" fill="#8a4829"/>
<rect x="114" y="3.600" width="32" height="2" fill="#b4382e"/><rect x="122" y="34.700" width="26" height="2.300" fill="#b6322c"/><rect x="132" y="64.400" width="20" height="2" fill="#a8382c"/>
<rect x="152" y="-3" width="2.800" height="76" fill="#a02f2c"/>
<rect x="155.400" y="-3" width="2.200" height="98" fill="#c2bca8"/><rect x="158" y="-3" width="4.500" height="98" fill="#5e3522"/><rect x="162.600" y="-3" width="2.900" height="98" fill="#cbc6b2"/><rect x="166" y="-3" width="6" height="98" fill="#7a4a30"/>
<rect x="145.300" y="-3" width="1.500" height="40" fill="#b5b0a4"/><ellipse cx="146.500" cy="46.500" rx="2.200" ry="9" fill="#b31f24"/>
<circle cx="163.500" cy="53.500" r="1.900" fill="#c8c84a"/>
<rect x="160" y="42" width="10" height="3" fill="#1e1e24"/>
<!-- hair -->
<path d="M59 34c-3-20 8-38 30-38 22 0 34 14 32 38-1 8-3 14-6 20l-10-30-36 4-2 34c-5-8-7-18-8-28z" fill="#2a1d1b"/>
<ellipse cx="89" cy="10" rx="29" ry="18" fill="#2f211e"/>
<!-- sweater -->
<path d="M44 97c3-18 12-30 30-38l14 6 30-6c22 6 40 18 48 38z" fill="#1d7f8c"/>
<path d="M118 60c20 6 38 16 48 36h-34z" fill="#2b66a6"/>
<path d="M44 97c4-12 10-22 20-30l6 30z" fill="#176a78"/>
<path d="M128 70l14 26M140 74l14 22M58 78l10 18" stroke="#25a0a4" stroke-width="2" fill="none"/>
<!-- neck/skin V -->
<path d="M76 60l26 32 20-34z" fill="#e2c6b4"/>
<path d="M94 84l8 8 8-10z" fill="#f1eeea"/>
<!-- face -->
<path d="M65 40c0-18 10-27 24-27s24 9 24 27c0 20-8 36-22 43-14-5-26-22-26-43z" fill="#e9d0c0"/>
<path d="M104 24c6 6 9 12 9 20 0 14-4 26-12 34 4-14 6-34 3-54z" fill="#cfae9e"/>
<ellipse cx="82" cy="34" rx="13" ry="11" fill="#f4e0d2"/>
<path d="M70 33c4-2.500 9-2.500 13 0M95 32c4-2.500 8-2.500 12-.5" stroke="#5a3d34" stroke-width="1.300" fill="none"/>
<path d="M72 40c3 1.600 7 1.600 10 0M96 39.500c3 1.600 6 1.600 9 0" stroke="#3a2622" stroke-width="1.800" fill="none"/>
<path d="M86 54c2 1.500 5 1.500 7 0" stroke="#c39a8a" stroke-width="1.500" fill="none"/>
<path d="M83 63c4 1.500 9 1.500 13 0" stroke="#b85a52" stroke-width="2" fill="none"/>
<!-- headphones -->
<path d="M104 -2c12 4 18 14 18 28" stroke="#17171c" stroke-width="4" fill="none"/>
<rect x="112.500" y="23" width="10" height="22" rx="4.500" fill="#1b1b21"/>
<rect x="58.500" y="31" width="4.500" height="10" rx="2.200" fill="#1b1b21"/>
<circle cx="61.500" cy="40" r="1.300" fill="#d9d9d9"/>
<path d="M118 45c6 14 12 30 13 50" stroke="#1b1b21" stroke-width="1.200" fill="none"/>
</g>
<rect x="0" y="79.900" width="85.300" height="15" fill="#222" fill-opacity=".62"/>
</g>
<!-- tile 2 : Орлянская Т.Г. -->
<g clip-path="url(#k2)">
<rect x="0" y="96" width="171.500" height="97" fill="url(#w2)"/>
<rect x="0" y="96" width="65" height="97" fill="url(#c2)"/>
<g stroke="#a4a4ba" stroke-width="1" opacity=".6"><path d="M12 96v97M24 96v97M36 96v97M48 96v97M58 96v97"/></g>
<g filter="url(#b1)">
<rect x="64" y="96" width="3.500" height="97" fill="#80848f"/>
<rect x="63" y="154" width="3.500" height="12" fill="#d2ccb9"/>
<rect x="140" y="96" width="32" height="97" fill="#a0a4ab" opacity=".6"/>
<g transform="translate(-1,-4.500)">
<path d="M72 206c2-34 8-56 20-68 10-10 30-10 42 2 10 12 14 36 16 66z" fill="#1d1516"/>
<path d="M84 206c-2-22 0-40 8-46 12-8 34-8 44 2 6 10 6 28 4 44z" fill="#c89d86"/>
<path d="M85 168c2-18 12-30 26-32 14 2 26 12 30 32-12-16-24-22-32-22-10 2-18 10-24 22z" fill="#1d1516"/>
<ellipse cx="112" cy="160" rx="18" ry="8" fill="#d0a790"/>
<path d="M93 170c5-3 11-3 17-1M119 169c5-3 10-2 15 1" stroke="#3a2420" stroke-width="1.800" fill="none"/>
<path d="M96 176c4 1.500 9 1.500 13 0M121 176c4 1.500 8 1.500 12 0" stroke="#4a2e28" stroke-width="1.800" fill="none"/>
<path d="M110 178c-2 6-2 10 2 12 4 0 6-2 4-6" fill="#b98a72"/>
</g>
</g>
<rect x="0" y="177.300" width="86.800" height="15" fill="#222" fill-opacity=".62"/>
</g>
<!-- tile 3 : Татьяна Ш. -->
<g clip-path="url(#k3)">
<rect x="0" y="193" width="171.500" height="97" fill="#ece7df"/>
<g filter="url(#b1)">
<path d="M56 190h120v29h-108z" fill="#f6f4f2"/>
<path d="M66 219h108v72h-108z" fill="#efd9d3"/>
<path d="M96 219h80v40h-80z" fill="#f1e2dc"/>
<rect x="-3" y="190" width="62" height="100" fill="#ebe6dd"/>
<path d="M58 190l10 29v72h-6z" fill="#f3ecea"/>
<path d="M146 190h30v42c-12 3-26-8-30-42z" fill="#d2d0cd"/>
<path d="M152 196l3 8M160 194l2 12M167 198l1 14M156 212l8-4" stroke="#f6f6f6" stroke-width="1.200"/>
<path d="M32.400 193.500l18.800 4.500-2.300 28.400-16.800-13.200z" fill="#5c4229"/><path d="M35.500 197.500l12.500 3-1.800 19.500-10.700-8.500z" fill="#6d7b72"/><path d="M36 205l11.500 3-.8 8-10.700-7z" fill="#8c7a52"/>
<rect x="65.400" y="233.800" width="29" height="46.700" fill="#be8246"/><rect x="65.400" y="233.800" width="29" height="46.700" fill="none" stroke="#a06a36" stroke-width="1.500"/>
<rect x="58" y="276" width="8" height="14" fill="#ecc9c8"/>
</g>
<g filter="url(#b05)">
<g fill="none" stroke="#1f1d22" stroke-width="1.900"><circle cx="8.300" cy="235.300" r="6.600"/><circle cx="39.300" cy="238.300" r="7.200"/><path d="M15 236c3-5 7-5 9 0M25 238c2-6 6-7 8-1"/><circle cx="13" cy="238" r="2.500"/><circle cx="36" cy="240" r="2.800"/></g>
<path d="M22.600 212h3l.8 10h4.200l-3.800 4.500 1.600 14c2 1.500 3.200 3.500 3.200 6l-3.600 5h5.800v3.500h-19.400v-3.500h5.800l-3.600-5c0-2.500 1.200-4.500 3.200-6l1.600-14-3.800-4.500h4.200z" fill="#1f1d22"/>
<rect x="17.500" y="256" width="1.600" height="32" fill="#2a2830"/><rect x="28.500" y="256" width="1.600" height="32" fill="#2a2830"/>
<path d="M20.500 257h7l-1.500 12 2 6-2.500 6h-3l-2.500-6 2-6z" fill="#1f1d22"/>
<rect x="48.600" y="226" width="3" height="10" fill="#1f1d22"/><rect x="44.500" y="235.500" width="11" height="2.500" rx="1" fill="#1f1d22"/>
<rect x=".4" y="216" width="3" height="12" fill="#1f1d22"/><rect x="-3" y="227.500" width="10" height="2.500" rx="1" fill="#1f1d22"/>
<path d="M22.800 212l1.300-7 1.300 7zM48.800 226l1.300-7 1.300 7z" fill="#f4f0e6"/>
</g>
<g filter="url(#b1)">
<path d="M68 292c2-22 10-32 30-38h46c18 4 26 14 30 38z" fill="#1a171b"/>
<ellipse cx="127" cy="248" rx="19" ry="23" fill="#c9a39d"/>
<path d="M100 240c-4-22 10-34 28-34 20 0 30 14 26 34-2 8-6 12-8 14 2-14-2-24-8-30-10 4-24 6-30 4-4 6-4 14-2 22-4-2-6-6-6-10z" fill="#96694f"/>
<ellipse cx="126" cy="214" rx="20" ry="9" fill="#a97c5f"/>
<g fill="none" stroke="#3a2a34" stroke-width="1.400"><rect x="108" y="236" width="16" height="11" rx="3"/><rect x="130" y="238" width="16" height="11" rx="3"/><path d="M124 241h6"/></g>
<path d="M118 258c5 3 11 3 16 0" stroke="#a05a5a" stroke-width="1.800" fill="none"/>
<ellipse cx="127" cy="268" rx="10" ry="5" fill="#b0908e"/>
<ellipse cx="148" cy="289" rx="10" ry="5" fill="#a27a7a"/>
</g>
<rect x="0" y="275" width="57" height="15" fill="#222" fill-opacity=".62"/>
</g>
<!-- tile 4 : Шеменкова -->
<g clip-path="url(#k4)">
<rect x="-4" y="288" width="180" height="104" fill="url(#wp)" filter="url(#b1)"/>
<g filter="url(#b1)">
<path d="M76 362c-4-22 2-40 22-42 22-2 32 14 30 32l-4 10c0-14-6-20-12-22-10 2-22 4-30 2-2 6-2 14-2 22z" fill="#5e2a20"/>
<ellipse cx="100" cy="332" rx="21" ry="11" fill="#733627"/>
<path d="M82 356c0-12 8-18 20-18s20 8 20 18c0 14-6 26-20 30-12-2-20-14-20-30z" fill="#c9a8a1"/>
<path d="M88 356c4-2 8-2 12 0M108 356c4-2 8-2 12 0" stroke="#5a3a36" stroke-width="1.600" fill="none"/>
<path d="M72 392c0-8 4-14 12-16l6 10h24l6-10c6 2 10 8 12 16z" fill="#3a3a34"/>
<ellipse cx="103" cy="372" rx="4" ry="4" fill="#b98f86"/>
</g>
<rect x="0" y="372.500" width="171.300" height="15" fill="#222" fill-opacity=".66"/>
</g>
<!-- tile 5 : mac -->
<g clip-path="url(#k5)">
<rect x="0" y="388" width="171.500" height="97" fill="url(#m5)"/>
<rect x="0" y="388" width="171.500" height="97" fill="url(#m5b)"/>
<rect x="0" y="470" width="24.600" height="15" fill="#222" fill-opacity=".55"/>
</g>
<!-- tile 6 : active speaker (Елена Энгель) -->
<rect x="-.6" y="486.200" width="172.600" height="97" rx="1.500" fill="#242424" stroke="#7fae1e" stroke-width="1.200"/>
<g clip-path="url(#k6)">
<rect x="55" y="503.500" width="61.500" height="59.500" fill="#b6ac4b"/>
<g filter="url(#b05)">
<rect x="55" y="503.500" width="61.500" height="9" fill="#c6be62"/>
<rect x="55" y="545" width="16" height="18" fill="#aaa044"/>
<circle cx="66.200" cy="517.400" r="6" fill="#f4f4f4" stroke="#cfcbb0" stroke-width=".9"/><path d="M66.200 514v3.600l1.400 1" stroke="#445" stroke-width=".8" fill="none"/>
<rect x="60" y="529.700" width="10" height="8.500" fill="#eeeae4"/><rect x="61" y="530.700" width="8" height="6.500" fill="#4a3c44"/><rect x="64.500" y="532" width="3.500" height="3.500" fill="#cfc4c0"/>
<rect x="59.400" y="541.600" width="11.400" height="8.100" fill="#e8e8ec"/><rect x="60.400" y="542.600" width="9.400" height="6.100" fill="#7d92ad"/><rect x="61" y="545.500" width="5" height="3" fill="#cfd8e4"/>
<rect x="110.200" y="514.600" width="6.300" height="8.300" fill="#b58a84"/><rect x="111" y="515.600" width="5" height="5" fill="#8c6a66"/>
<rect x="114" y="527" width="3" height="34" fill="#3a2f22"/><rect x="113" y="554.800" width="3.500" height="4.200" fill="#e9eef6"/>
</g>
<g filter="url(#b05)">
<path d="M70 566c-2-26-1-45 8-54 8-8 22-8 30 0 8 9 9 28 7 54z" fill="#211b19"/>
<path d="M70 566c-2-22-1-38 4-48 1 16 3 32 5 48z" fill="#7b6b5e"/>
<path d="M77.500 536c0-12 6-19.500 15-19.500s15 7.500 15 19.500c0 14-5 22-15 26-10-4-15-12-15-26z" fill="#94564a"/>
<ellipse cx="92.500" cy="524" rx="9" ry="6" fill="#a9695b"/>
<ellipse cx="92.500" cy="543" rx="6" ry="5" fill="#a4625a"/>
<path d="M78 536c0-10 3-16 6-18-2 8-2 20 2 32-5-3-8-8-8-14zM107 536c0-10-3-16-6-18 2 8 2 20-2 32 5-3 8-8 8-14z" fill="#7a3f35"/>
<path d="M88 562l-9-6.500c-1 2-1 5 0 7zM97 562l7.500-6.500c1 2 1 5 0 7z" fill="#e4bcbc"/>
<path d="M80 566l2-9c6 4 15 4 21 0l2 9z" fill="#e6c2c2"/>
</g>
<g filter="url(#b05)">
<rect x="76" y="529.600" width="14.500" height="8" rx="3.600" fill="#24161f"/><rect x="94.500" y="529.600" width="14.500" height="8" rx="3.600" fill="#2c1a26"/><path d="M90 532h5" stroke="#b9a8a8" stroke-width="1"/><path d="M77 530.200h13M95.500 530.200h13" stroke="#8a8a90" stroke-width=".7"/>
<path d="M85 550c3-1.500 5.500-.5 7.500-.5s4.500-1 7.500.5c-3 2.800-12 2.800-15 0z" fill="#7a1422"/>
</g>
</g>
<rect x="-1.200" y="561.500" width="173.800" height="22.200" fill="url(#ov6)"/>
<path d="M81.200 570.800l4.600 4.200 4.600-4.200" stroke="#fff" stroke-width="1.500" fill="none"/>
<!-- muted mic icons -->
<g fill="#e8403a">
<g id="mic"><rect x="6.200" y="180.300" width="3.600" height="6.200" rx="1.800"/><path d="M4.800 185.200c0 4.400 6.400 4.400 6.400 0" stroke="#e8403a" stroke-width=".9" fill="none"/><rect x="7.600" y="188.200" width=".9" height="1.600"/><rect x="5.800" y="189.600" width="4.400" height=".9"/><path d="M3.600 190l9.400-10.200" stroke="#e8403a" stroke-width="1"/></g>
<use href="#mic" y="195.200"/>
<use href="#mic" y="390.300" opacity=".22"/>
</g>
</svg>

<!-- inner (screenshot) taskbar -->
<div class="a" style="left:0;top:726px;width:1267.400px;height:30.500px;background:linear-gradient(90deg,#444 0,#414141 520px,#3e3e3e 1000px,#3c3c3e 1105px,#2c3345 1158px,#202c47 1182px,#1c2946 1267px)"></div>
<div class="a" style="left:383.200px;top:726px;width:36.600px;height:30.500px;background:#6a6a67"></div>
<!-- outer (real) taskbar -->
<div class="a" style="left:0;top:769.400px;width:1280px;height:30.600px;background:linear-gradient(90deg,#1f3742 0,#1e3440 500px,#1c2e42 900px,#1a2744 1280px)"></div>
<div class="a" style="left:306.900px;top:769.400px;width:36.900px;height:30.600px;background:#4a5e67"></div>
<div class="a" style="left:1240px;top:769.400px;width:30px;height:30.600px;background:#2b3b59"></div>
<!-- tooltip -->
<div class="a" style="left:1174.500px;top:755.200px;width:104.800px;height:14.200px;background:#fff;border:.8px solid #8a8a8a;box-shadow:1px 1px 2px rgba(0,0,0,.3)"></div>
<svg class="a" style="left:0;top:700px" width="1280" height="100" viewBox="0 700 1280 100">
<defs>
<linearGradient id="ali" x1="0" y1="0" x2="1" y2="1"><stop offset="0" stop-color="#b55cff"/><stop offset="1" stop-color="#7a3df0"/></linearGradient>
<linearGradient id="edg" x1="0" y1="0" x2="1" y2="1"><stop offset="0" stop-color="#2fc1d4"/><stop offset=".5" stop-color="#1b8fd6"/><stop offset="1" stop-color="#0c59a4"/></linearGradient>
<linearGradient id="edg2" x1="0" y1="1" x2="1" y2="0"><stop offset="0" stop-color="#1f9fd8"/><stop offset="1" stop-color="#6fd94a"/></linearGradient>
<radialGradient id="ffx" cx=".7" cy=".12" r="1"><stop offset="0" stop-color="#fff36b"/><stop offset=".25" stop-color="#ffbd2e"/><stop offset=".5" stop-color="#ff7a22"/><stop offset=".8" stop-color="#f2325c"/><stop offset="1" stop-color="#c026a0"/></radialGradient>
<g id="tb">
<!-- start -->
<path d="M11.800 736.900l5.700-.8v5.500h-5.700zM18.300 736l6.500-.95v6.550h-6.500zM11.800 742.400h5.700v5.500l-5.700-.8zM18.300 742.400h6.500v6.500l-6.500-.95z" fill="#fff"/>
<!-- search -->
<circle cx="56.400" cy="739.300" r="4.500" fill="none" stroke="#fff" stroke-width="1.300"/><path d="M53.400 742.700l-4.600 5" stroke="#fff" stroke-width="1.400"/>
<!-- task view -->
<g fill="none" stroke="#fff" stroke-width="1.100"><rect x="87.400" y="738" width="6.600" height="6.400"/><path d="M85 735.300v2M85 745v2.200M85 735.800h9.600M85 746.700h9.600M96.800 735.300v12"/></g><circle cx="96.800" cy="739.600" r="1.300" fill="#fff"/>
<!-- alice -->
<circle cx="134" cy="741.200" r="9.300" fill="url(#ali)"/><path d="M134 736.200c1 0 1.700.5 2.200 1.400l3 5.400c.8 1.500-.2 2.900-1.900 2.900h-6.600c-1.700 0-2.700-1.400-1.900-2.900l3-5.400c.5-.9 1.200-1.400 2.200-1.400z" fill="#fff"/>
</g>
<g id="ynd"><circle cx="252.100" cy="741.200" r="9.300" fill="#f4262c"/></g>
<g id="edgei"><circle cx="289.600" cy="741.400" r="9.400" fill="url(#edg)"/>
<path d="M280.600 739c1.500-5 6-7.500 10.500-7 4.500.6 7.800 4.200 7.900 8.400 0 2.600-1.800 4.300-4.300 4.300-2 0-3.200-1-3.200-2.300 0-1 .5-1.500.5-2.500 0-1.700-1.600-3.200-4-3.200-3 0-5.500 2-7.400 2.300z" fill="url(#edg2)"/>
<path d="M284 744.500c0-3 2-5.500 5-5.800-1 1-1.500 2.200-1.300 3.800.3 2.600 2.500 4.600 5.600 4.600 1.500 0 2.800-.4 4-1.200-1.600 3-4.600 4.900-8 4.900-3.200 0-5.300-2.800-5.300-6.300z" fill="#0b4f96"/></g>
<g id="expl"><path d="M355.600 736.200h6.200l1.400 1.600h9.300v10.200h-16.900z" fill="#f5c544"/><path d="M355.600 739.400h16.900v8.600h-16.900z" fill="#fbdd6e"/><path d="M359 743h10v5h-10z" fill="#2d8fe6"/><path d="M361.600 745.600h4.800v2.400h-4.800z" fill="#fbdd6e"/></g>
<g id="tray">
<path d="M1093.400 743.600l4.600-4.700 4.600 4.700" stroke="#fff" stroke-width="1.200" fill="none"/>
<g fill="none" stroke="#fff" stroke-width="1"><rect x="1112.600" y="738.200" width="6" height="6" rx="1.200"/><path d="M1118.600 740.200l2.600-1.400v5l-2.600-1.400"/><path d="M1113.400 736.600c1.800-1.700 4.700-1.700 6.500 0M1113.400 746c1.800 1.700 4.700 1.700 6.500 0"/></g>
<g fill="none" stroke="#fff" stroke-width="1"><path d="M1131.300 737.300h9.500v6.600h-7.500M1135.300 744v2.200M1132.600 746.400h6"/><rect x="1128.300" y="736.600" width="3" height="2.600"/><path d="M1129.800 739.200v4.600h1.600"/></g>
<g fill="none" stroke="#fff" stroke-width="1"><path d="M1146.600 739.600h2l2.800-2.600v8.400l-2.800-2.600h-2z"/><path d="M1153.400 739.300c.9 1.200.9 2.800 0 4M1155.400 737.800c1.700 2.100 1.700 5 0 7M1157.400 736.400c2.400 3 2.400 6.900 0 9.800"/></g>
<path d="M1249 735h12v8.400h-8.600l-3.400 2.800z" fill="#fff"/><path d="M1251.200 737.300h7.800M1251.200 739.300h7.800M1251.200 741.300h7.800" stroke="#1e2b48" stroke-width=".8"/>
<circle cx="1260.500" cy="746.900" r="5.300" fill="#2b2b2d" stroke="#8c8c8c" stroke-width=".9"/>
</g>
</defs>
<use href="#tb"/>
<use href="#tb" y="43.500"/>
<!-- yandex offset in outer bar / other per-bar icons -->
<!-- store bags -->
<g id="bag"><path d="M172.700 737.500v-2.200c0-1.300.8-2.100 2.100-2.100h4.600c1.300 0 2.100.8 2.100 2.100v2.200" fill="none" stroke="#2e9bea" stroke-width="1.300"/><path d="M168.300 737.300h17.600v10c0 1.800-1 2.800-2.800 2.800h-12c-1.800 0-2.800-1-2.800-2.800z" fill="#f7f7f7"/><rect x="173.600" y="739.600" width="3.100" height="3.100" fill="#f25022"/><rect x="177.400" y="739.600" width="3.100" height="3.100" fill="#7fba00"/><rect x="173.600" y="743.400" width="3.100" height="3.100" fill="#00a4ef"/><rect x="177.400" y="743.400" width="3.100" height="3.100" fill="#ffb900"/></g>
<use href="#bag" x="-1.300" y="43.300"/>
<!-- mail -->
<g id="mail"><path d="M205.800 738.600l8.800-5.800 8.800 5.800v10.600h-17.600z" fill="#1673c8"/><path d="M205.800 738.800l8.800 6.200 8.800-6.200v10.600h-17.600z" fill="#2f9bf0"/><path d="M207.400 737.600h14.400l-7.200 6z" fill="#e9f3fc"/><path d="M205.800 749.400l7-6.400M223.400 749.400l-7-6.400" stroke="#1673c8" stroke-width=".7"/><circle cx="224.400" cy="746.800" r="5.400" fill="#2e2e30" stroke="#c9c9c9" stroke-width=".9"/></g>
<use href="#mail" x="-1.800" y="43.500"/>
<use href="#ynd"/><use href="#ynd" x="-1.500" y="43.500"/>
<use href="#edgei"/><use href="#edgei" x="-1.500" y="43.500"/>
<use href="#expl"/><use href="#expl" x="-1.600" y="43.400"/>
<!-- firefox icons -->
<g id="fx"><circle cx="326.600" cy="741.600" r="9.200" fill="url(#ffx)"/><circle cx="326.300" cy="742" r="4.200" fill="#7a3fd0"/><path d="M317.500 739c.8-2.800 2.600-4.200 4-4.800-.3 1.500.3 2.600 1.600 3.200 2 .8 4.200.5 5.300 2.100-2.400-.8-5.300 0-5.800 2.400-.5 2.300 1.300 4 3.500 4.200-4 2.100-9.300-1-8.600-7.100z" fill="#ff8a1f"/><path d="M327.500 732.200c3 .8 5.800 3.600 7 7 .6-2.600-.5-5.700-2.500-7.300.2 1 0 1.600-.3 2.100-1-1.300-2.500-2-4.200-1.800z" fill="#ffe14d"/></g>
<use href="#fx" x="-1.300" y="43"/>
<!-- powerpoint -->
<path d="M399 735.400h10.600v11.600h-10.600z" fill="#f4f4f4"/><path d="M401.600 738h6M401.600 740.600h6M401.600 743.200h6" stroke="#d24726" stroke-width="1.200"/><path d="M392.800 734.800l9.800-2.100v17l-9.800-2.100z" fill="#d24726"/>
<!-- zoom -->
<rect x="429.600" y="732" width="18.800" height="18.400" rx="8" fill="#0b5cff"/>
<!-- word (outer) -->
<path d="M397.600 778.400h10.400v12.400h-10.400z" fill="#f4f4f4"/><path d="M400.600 781h6M400.600 783.400h6M400.600 785.800h6M400.600 788.200h6" stroke="#2b579a" stroke-width="1"/><path d="M391.300 778l9.800-2v17.200l-9.800-2z" fill="#2b579a"/>
<!-- running underlines -->
<g fill="#76b9ed"><rect x="274.400" y="754.700" width="30.200" height="1.800"/><rect x="312" y="754.700" width="30" height="1.800"/><rect x="349.400" y="754.700" width="30" height="1.800"/><rect x="383.200" y="754.700" width="36.600" height="1.800"/><rect x="424" y="754.700" width="30" height="1.800"/>
<rect x="306.900" y="798.300" width="36.900" height="1.700"/><rect x="385" y="798.300" width="30" height="1.700"/></g>
<use href="#tray"/>
<use href="#tray" y="43.400"/>
<!-- small view buttons above inner taskbar (ppt status bar of second window) -->
<rect x="1243.300" y="709.400" width="17" height="16.600" fill="#d5ebfa" stroke="#8cc4ec" stroke-width=".9"/>
<path d="M1249.800 714h7M1249.800 718h7M1249.800 722h7" stroke="#7a7a7a" stroke-width=".8" stroke-dasharray="2 .8"/><path d="M1246.200 713v2M1246.200 717v2" stroke="#6a8fb3" stroke-width="1.400"/><path d="M1246.200 721v2" stroke="#d05a4a" stroke-width="1.400"/>
<rect x="1263.400" y="713" width="4" height="8" fill="#fff" stroke="#9a9a9a" stroke-width=".8"/><rect x="1264.600" y="715" width="2.800" height="3" fill="#3b78c4"/>
</svg>


<div id="texts">
<span class="t" style="left:58.60px;top:11.00px;font-size:10.5px;letter-spacing:-0.628px;color:#15141a;-webkit-mask-image:linear-gradient(90deg,#000 86%,transparent 100%);">Сборная Франции играет с ко</span>
<span class="t" style="left:230.50px;top:11.00px;font-size:10.5px;letter-spacing:-0.584px;color:#15141a;">Почта Mail.ru</span>
<span class="t" style="left:402.00px;top:11.00px;font-size:10.5px;letter-spacing:-0.721px;color:#15141a;-webkit-mask-image:linear-gradient(90deg,#000 86%,transparent 100%);">изображение.png (Изображен</span>
<span class="t" style="left:573.00px;top:11.00px;font-size:10.5px;letter-spacing:-0.889px;color:#15141a;-webkit-mask-image:linear-gradient(90deg,#000 93%,transparent 110%);">Участие представителей НОЦ</span>
<span class="t" style="left:244.40px;top:44.00px;font-size:11px;letter-spacing:-0.084px;color:#7d7d85;-webkit-mask-image:linear-gradient(90deg,#000 97%,transparent 100%);">https://af.<span style="color:#15141a">attachmail.ru</span>/cgi-bin/readmsg?id=16700700730233181914;0;1;3&amp;mode=attachment&amp;email=ttaganova@mail.ru&amp;ct=image%2fpng&amp;cn=изображение.png&amp;cte=binary</span>
<span class="t" style="left:20.10px;top:133.00px;font-size:15.2px;letter-spacing:0.127px;color:#e17552;">Восстановление документа</span>
<span class="t" style="left:20.10px;top:157.00px;font-size:8.7px;letter-spacing:-0.066px;color:#5a5a5a;">PowerPoint восстановил следующие файлы.</span>
<span class="t" style="left:20.10px;top:168.00px;font-size:8.7px;letter-spacing:-0.044px;color:#5a5a5a;">Сохраните требуемые.</span>
<span class="t" style="left:20.10px;top:190.00px;font-size:8.8px;letter-spacing:-0.102px;color:#444;font-weight:bold;">Доступные файлы</span>
<span class="t" style="left:55.90px;top:210.00px;font-size:8.7px;letter-spacing:0.177px;color:#1e1e1e;font-weight:bold;">дидактические возможности слова...</span>
<span class="t" style="left:55.90px;top:221.00px;font-size:8.7px;letter-spacing:-0.049px;color:#333;">Версия, созданная при последнем сох...</span>
<span class="t" style="left:55.90px;top:232.00px;font-size:8.7px;letter-spacing:-0.240px;color:#333;">03.12.2022 13:22</span>
<span class="t" style="left:13.75px;top:83.00px;font-size:9.2px;letter-spacing:-0.332px;color:#444;">Вставить</span>
<span class="t" style="left:69.90px;top:75.00px;font-size:9.2px;letter-spacing:-0.097px;color:#444;">Копировать</span>
<span class="t" style="left:69.90px;top:92.00px;font-size:9.2px;letter-spacing:-0.047px;color:#444;">Формат по образцу</span>
<span class="t" style="left:49.00px;top:109.00px;font-size:9.2px;letter-spacing:-0.361px;color:#6b6b6b;">Буфер обмена</span>
<span class="t" style="left:165.60px;top:83.00px;font-size:9.2px;letter-spacing:-0.346px;color:#444;">Создать</span>
<span class="t" style="left:167.50px;top:95.00px;font-size:9.2px;letter-spacing:-0.412px;color:#444;">слайд</span>
<span class="t" style="left:217.50px;top:75.00px;font-size:9.2px;letter-spacing:-0.137px;color:#444;">Сбросить</span>
<span class="t" style="left:217.50px;top:92.00px;font-size:9.2px;letter-spacing:-0.479px;color:#444;">Раздел</span>
<span class="t" style="left:198.50px;top:109.00px;font-size:9.2px;letter-spacing:-0.701px;color:#6b6b6b;">Слайды</span>
<span class="t" style="left:273.10px;top:86.00px;font-size:9px;letter-spacing:1.559px;color:#8a8a8a;font-weight:bold;">Ж</span>
<span class="t" style="left:291.00px;top:86.00px;font-size:9px;letter-spacing:1.053px;color:#8a8a8a;font-weight:bold;font-style:italic;">К</span>
<span class="t" style="left:308.30px;top:86.00px;font-size:9px;color:#8a8a8a;">Ч</span>
<span class="t" style="left:325.50px;top:85.00px;font-size:9.4px;letter-spacing:-0.266px;color:#8a8a8a;font-weight:bold;text-shadow:.8px .8px 0 #d0d0d0;">S</span>
<span class="t" style="left:338.90px;top:87.00px;font-size:8px;letter-spacing:-0.269px;color:#9a9a9a;">abc</span>
<span class="t" style="left:356.60px;top:84.00px;font-size:8px;letter-spacing:0.361px;color:#9a9a9a;">AV</span>
<span class="t" style="left:381.00px;top:85.00px;font-size:9.6px;letter-spacing:-0.225px;color:#a0a0a0;">Aa</span>
<span class="t" style="left:415.60px;top:85.00px;font-size:11.2px;letter-spacing:-0.069px;color:#9a9a9a;">A</span>
<span class="t" style="left:383.70px;top:62.00px;font-size:10.5px;letter-spacing:0.684px;color:#a0a0a0;">A</span>
<span class="t" style="left:401.50px;top:64.00px;font-size:8.6px;letter-spacing:0.266px;color:#a0a0a0;">A</span>
<span class="t" style="left:333.00px;top:109.00px;font-size:9.2px;letter-spacing:-0.297px;color:#6b6b6b;">Шрифт</span>
<span class="t" style="left:584.80px;top:75.00px;font-size:9.2px;letter-spacing:-0.212px;color:#9c9c9c;">Выровнять текст</span>
<span class="t" style="left:584.80px;top:91.00px;font-size:9.2px;letter-spacing:-0.136px;color:#9c9c9c;">Преобразовать в SmartArt</span>
<span class="t" style="left:555.70px;top:109.00px;font-size:9.2px;letter-spacing:-0.296px;color:#6b6b6b;">Абзац</span>
<span class="t" style="left:820.60px;top:83.00px;font-size:9.2px;letter-spacing:0.003px;color:#3a3a3a;text-shadow:0 0 .3px #3a3a3a;">Упорядочить</span>
<span class="t" style="left:879.40px;top:83.00px;font-size:9.2px;letter-spacing:-0.102px;color:#9c9c9c;">Экспресс-</span>
<span class="t" style="left:885.60px;top:95.00px;font-size:9.2px;letter-spacing:-0.208px;color:#9c9c9c;">стили</span>
<span class="t" style="left:841.60px;top:109.00px;font-size:9.2px;letter-spacing:-0.398px;color:#6b6b6b;">Рисование</span>
<span class="t" style="left:941.00px;top:75.00px;font-size:9.2px;letter-spacing:0.019px;color:#9c9c9c;">Контур фигуры</span>
<span class="t" style="left:941.00px;top:92.00px;font-size:9.2px;letter-spacing:-0.220px;color:#9c9c9c;">Эффекты фигуры</span>
<span class="t" style="left:1050.00px;top:75.00px;font-size:9.2px;letter-spacing:0.025px;color:#3b3b3b;width:38px;overflow:hidden;">Заменить</span>
<span class="t" style="left:1050.00px;top:92.00px;font-size:9.2px;letter-spacing:-0.236px;color:#3b3b3b;width:38px;overflow:hidden;">Выделить</span>
<span class="t" style="left:1036.00px;top:109.00px;font-size:9.2px;letter-spacing:-0.214px;color:#6b6b6b;width:52px;overflow:hidden;">Редактирование</span>
<span class="t" style="left:259.00px;top:133.00px;font-size:10.8px;color:#d8583a;">1</span>
<span class="t" style="left:258.60px;top:215.00px;font-size:10.8px;color:#555;">2</span>
<span class="t" style="left:258.60px;top:296.00px;font-size:10.8px;color:#555;">3</span>
<span class="t" style="left:258.40px;top:378.00px;font-size:10.8px;color:#555;">4</span>
<span class="t" style="left:258.60px;top:459.00px;font-size:10.8px;color:#555;">5</span>
<span class="t" style="left:258.60px;top:541.00px;font-size:10.8px;color:#555;">6</span>
<span class="t" style="left:258.80px;top:623.00px;font-size:10.8px;color:#555;">7</span>
<span class="t" style="left:258.60px;top:704.00px;font-size:10.8px;color:#555;">8</span>
<span class="t" style="left:277.60px;top:146.00px;font-size:5.1px;letter-spacing:-0.127px;color:#46622c;font-weight:bold;">ДИДАКТИЧЕСКИЙ ПОТЕНЦИАЛ</span>
<span class="t" style="left:277.60px;top:152.00px;font-size:5.1px;letter-spacing:-0.233px;color:#46622c;font-weight:bold;">СЛОВАРНЫХ БЛОГОВ И</span>
<span class="t" style="left:277.60px;top:158.00px;font-size:5.1px;letter-spacing:-0.219px;color:#46622c;font-weight:bold;">ВОЛОНТЕРСКИХ СЛОВАРЕЙ</span>
<span class="t" style="left:277.60px;top:184.00px;font-size:2.6px;letter-spacing:-0.039px;color:#8a8a8a;">Т.А. Таганова</span>
<span class="t" style="left:277.60px;top:188.00px;font-size:2.6px;letter-spacing:-0.063px;color:#8a8a8a;">Ивановский государственный университет</span>
<span class="t" style="left:472.30px;top:317.00px;font-size:31.2px;letter-spacing:0.349px;color:#2a5010;font-weight:bold;">ДИДАКТИЧЕСКИЙ ПОТЕНЦИАЛ</span>
<span class="t" style="left:474.00px;top:356.00px;font-size:31.2px;letter-spacing:-0.590px;color:#2a5010;font-weight:bold;">СЛОВАРНЫХ БЛОГОВ И</span>
<span class="t" style="left:474.30px;top:396.00px;font-size:31.2px;letter-spacing:-0.386px;color:#2a5010;font-weight:bold;">ВОЛОНТЕРСКИХ СЛОВАРЕЙ</span>
<span class="t" style="left:474.20px;top:546.00px;font-size:14.6px;letter-spacing:0.424px;color:#404040;font-weight:bold;">Т.А. <span style="text-decoration:underline wavy #e05252 .7px;text-underline-offset:1.5px">Таганова</span></span>
<span class="t" style="left:473.80px;top:572.00px;font-size:14.6px;letter-spacing:-0.006px;color:#404040;font-weight:bold;">Ивановский государственный университет</span>
<span class="t" style="left:1093.70px;top:147.00px;font-size:10.5px;letter-spacing:-0.397px;color:#fff;">Tatyana Taganova</span>
<span class="t" style="left:1107.80px;top:244.00px;font-size:10.5px;letter-spacing:-0.398px;color:#fff;">Орлянская Т.Г.</span>
<span class="t" style="left:1094.00px;top:341.00px;font-size:10.5px;letter-spacing:-0.433px;color:#fff;">Татьяна Ш.</span>
<span class="t" style="left:1107.40px;top:439.00px;font-size:10.5px;letter-spacing:-0.389px;color:#fff;">Шеменкова Светлана Сергеевна</span>
<span class="t" style="left:1093.70px;top:537.00px;font-size:10.5px;letter-spacing:-0.615px;color:#fff;">mac</span>
<span class="t" style="left:1107.70px;top:634.00px;font-size:10.5px;letter-spacing:-0.655px;color:#3d3d3d;">Елена Энгель</span>
<span class="t" style="left:248.40px;top:736.00px;font-size:12px;color:#fff;font-weight:bold;">Я</span>
<span class="t" style="left:246.90px;top:779.00px;font-size:12px;color:#fff;font-weight:bold;">Я</span>
<span class="t" style="left:222.20px;top:743.00px;font-size:8.4px;color:#fff;font-weight:bold;">4</span>
<span class="t" style="left:220.40px;top:786.00px;font-size:8.4px;color:#fff;font-weight:bold;">4</span>
<span class="t" style="left:394.40px;top:736.00px;font-size:10.5px;color:#fff;font-weight:bold;">P</span>
<span class="t" style="left:391.80px;top:780.00px;font-size:9.5px;color:#fff;font-weight:bold;">W</span>
<span class="t" style="left:432.60px;top:738.00px;font-size:5px;letter-spacing:-0.066px;color:#fff;font-weight:bold;">zoom</span>
<span class="t" style="left:1166.70px;top:736.00px;font-size:9.6px;letter-spacing:-1.166px;color:#fff;">ENG</span>
<span class="t" style="left:1166.70px;top:780.00px;font-size:9.6px;letter-spacing:-1.166px;color:#fff;">ENG</span>
<span class="t" style="left:1204.20px;top:731.00px;font-size:9.3px;letter-spacing:-0.593px;color:#fff;">15:16</span>
<span class="t" style="left:1193.75px;top:744.00px;font-size:9.3px;letter-spacing:-0.503px;color:#fff;">03.12.2022</span>
<span class="t" style="left:1204.20px;top:774.00px;font-size:9.3px;letter-spacing:-0.593px;color:#fff;">18:10</span>
<span class="t" style="left:1193.75px;top:787.00px;font-size:9.3px;letter-spacing:-0.503px;color:#fff;">04.12.2022</span>
<span class="t" style="left:1258.20px;top:743.00px;font-size:8.4px;color:#fff;font-weight:bold;">5</span>
<span class="t" style="left:1258.20px;top:786.00px;font-size:8.4px;color:#fff;font-weight:bold;">2</span>
<span class="t" style="left:1179.00px;top:757.00px;font-size:9.4px;letter-spacing:-0.183px;color:#575757;">Новых уведомлений: 2</span>
<span class="t" style="left:281.30px;top:332.00px;font-size:3.6px;letter-spacing:0.122px;color:#efe6ff;font-weight:bold;">About</span>
<span class="t" style="left:295.00px;top:332.00px;font-size:3.6px;letter-spacing:0.081px;color:#fff0e0;font-weight:bold;">words</span>
<span class="t" style="left:272.30px;top:353.00px;font-size:2.9px;letter-spacing:-0.317px;color:#3a3a3a;font-weight:bold;">New words – 28 November 2022</span>
<span class="t" style="left:281.90px;top:302.00px;font-size:2.8px;letter-spacing:-0.326px;color:#9a9a9a;">ELEZINDROS BY DATE</span>
<span class="t" style="left:291.80px;top:401.00px;font-size:2.8px;letter-spacing:-0.354px;color:#8a8a8a;">OPEN DICTIONARY</span>
</div>
</body></html>
